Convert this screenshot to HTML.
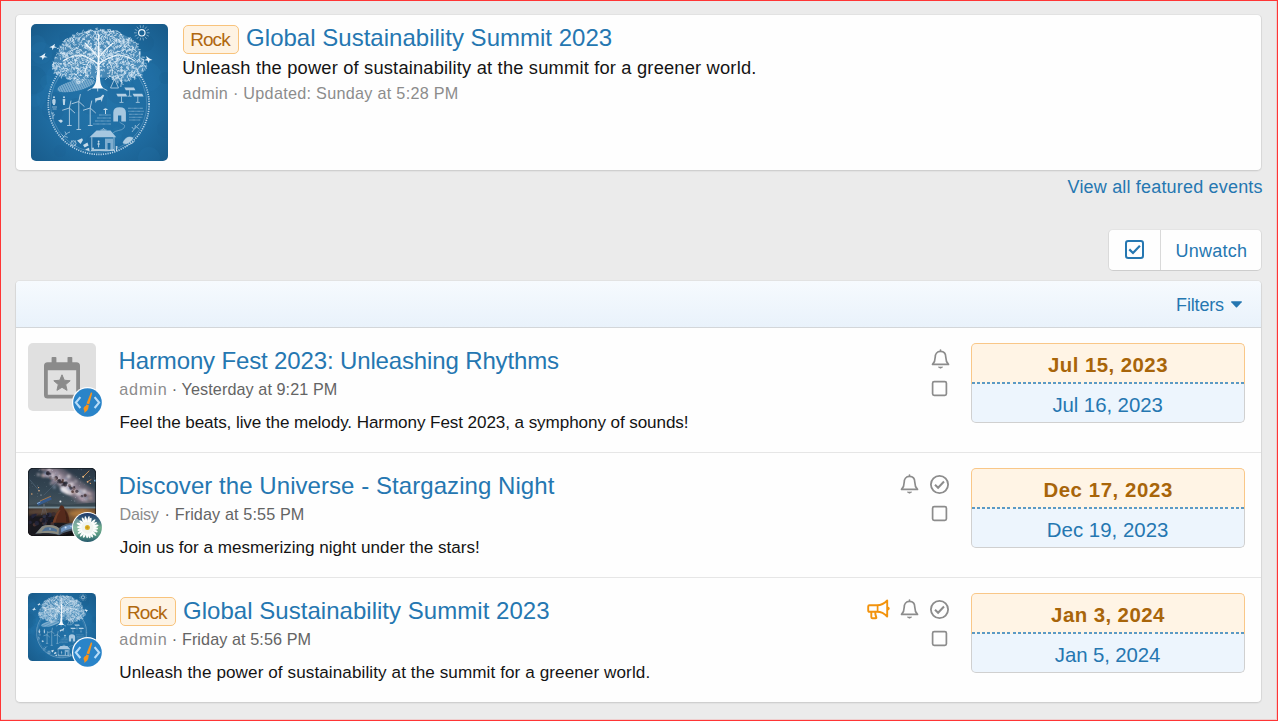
<!DOCTYPE html>
<html><head><meta charset="utf-8"><title>Events</title>
<style>
html,body{margin:0;padding:0}
body{width:1278px;height:721px;position:relative;overflow:hidden;background:#ebebeb;font-family:"Liberation Sans",sans-serif;}
.frame{position:absolute;left:0;top:0;width:1276px;height:719px;border:1px solid #ff3535;pointer-events:none;z-index:50;box-shadow:inset -1px -1px 0 rgba(255,53,53,.16)}
.t{position:absolute;white-space:nowrap;}
.card{position:absolute;box-sizing:border-box;background:#fefefe;border:1px solid #d8d8d8;border-top-color:#e2e2e2;border-bottom-color:#cfcfcf;border-radius:5px;box-shadow:0 1px 1px rgba(0,0,0,.04)}
.btn{position:absolute;box-sizing:border-box;background:#fefefe;border:1px solid #dadada;border-top-color:#e4e4e4;border-bottom-color:#cdcdcd;border-radius:5px}
.label{position:absolute;box-sizing:border-box;background:#fef3e3;border:1.3px solid #f8c37c;border-radius:5px}
.dbox{position:absolute;width:274px;height:80px;box-sizing:border-box}
.dtop{position:absolute;left:0;top:0;right:0;height:41px;box-sizing:border-box;background:#fff4e5;border:1px solid #f9c788;border-bottom:none;border-radius:5px 5px 0 0}
.ddash{position:absolute;left:1px;right:1px;top:39px;height:2px;background:repeating-linear-gradient(90deg,#5a9ac6 0,#5a9ac6 3px,rgba(255,244,229,0) 3px,rgba(255,244,229,0) 5.07px)}
.dbot{position:absolute;left:0;top:41px;right:0;height:39px;box-sizing:border-box;background:#edf5fd;border:1px solid #d0d0d0;border-top:none;border-radius:0 0 5px 5px}
</style></head><body>
<svg width="0" height="0" style="position:absolute"><defs>
<radialGradient id="tbg" cx="50%" cy="52%" r="75%"><stop offset="0" stop-color="#2374aa"/><stop offset="0.55" stop-color="#1f6ca1"/><stop offset="1" stop-color="#175886"/></radialGradient>
<pattern id="tpd" width="2.2" height="1.6" patternUnits="userSpaceOnUse" patternTransform="rotate(-14)"><path d="M0 0.8 H1.5" stroke="#dbe9f4" stroke-width="0.7"/></pattern>
<symbol id="treeart" viewBox="0 0 137 137">
<rect width="137" height="137" fill="url(#tbg)"/>
<circle cx="62" cy="77" r="14" fill="#195d8e" opacity=".14"/>
<circle cx="62" cy="117" r="7" fill="#195d8e" opacity=".14"/>
<circle cx="86" cy="109" r="6" fill="#2a7db4" opacity=".14"/>
<circle cx="19" cy="74" r="14" fill="#2b80b8" opacity=".14"/>
<circle cx="82" cy="54" r="10" fill="#155581" opacity=".14"/>
<circle cx="85" cy="114" r="6" fill="#2b80b8" opacity=".14"/>
<circle cx="26" cy="33" r="5" fill="#195d8e" opacity=".14"/>
<circle cx="45" cy="81" r="7" fill="#155581" opacity=".14"/>
<circle cx="88" cy="68" r="12" fill="#195d8e" opacity=".14"/>
<circle cx="90" cy="56" r="11" fill="#2b80b8" opacity=".14"/>
<circle cx="97" cy="43" r="7" fill="#2a7db4" opacity=".14"/>
<circle cx="4" cy="77" r="6" fill="#2b80b8" opacity=".14"/>
<circle cx="116" cy="53" r="15" fill="#2b80b8" opacity=".14"/>
<circle cx="29" cy="127" r="6" fill="#195d8e" opacity=".14"/>
<circle cx="134" cy="54" r="6" fill="#155581" opacity=".14"/>
<circle cx="107" cy="37" r="6" fill="#2a7db4" opacity=".14"/>
<circle cx="2" cy="56" r="14" fill="#155581" opacity=".14"/>
<circle cx="34" cy="14" r="6" fill="#195d8e" opacity=".14"/>
<circle cx="24" cy="77" r="9" fill="#155581" opacity=".14"/>
<circle cx="135" cy="105" r="9" fill="#195d8e" opacity=".14"/>
<circle cx="16" cy="58" r="7" fill="#2a7db4" opacity=".14"/>
<circle cx="118" cy="134" r="11" fill="#2b80b8" opacity=".14"/>
<circle cx="29" cy="54" r="14" fill="#2b80b8" opacity=".14"/>
<circle cx="6" cy="20" r="9" fill="#2b80b8" opacity=".14"/>
<circle cx="106" cy="45" r="8" fill="#2b80b8" opacity=".14"/>
<circle cx="10" cy="29" r="11" fill="#2b80b8" opacity=".14"/>
<circle cx="82" cy="51" r="10" fill="#195d8e" opacity=".14"/>
<circle cx="114" cy="19" r="9" fill="#155581" opacity=".14"/>
<circle cx="43" cy="31" r="11" fill="#155581" opacity=".14"/>
<circle cx="22" cy="86" r="11" fill="#195d8e" opacity=".14"/>
<circle cx="67.7" cy="80" r="50.4" fill="none" stroke="#c4dcee" stroke-width="1.7" stroke-dasharray="1.2 1.1" opacity=".9"/>
<circle cx="67.7" cy="80" r="48.2" fill="none" stroke="#c4dcee" stroke-width=".5" opacity=".5"/>
<g transform="rotate(-13 45 61.5)"><ellipse cx="45" cy="61.5" rx="19" ry="5.4" fill="#7fb0d3" opacity=".4"/><ellipse cx="45" cy="61.5" rx="19" ry="5.4" fill="url(#tpd)" opacity=".75"/></g>
<g opacity=".33" fill="#9cc4e2"><ellipse cx="68" cy="30" rx="41" ry="24"/><ellipse cx="34" cy="41" rx="12" ry="12"/><ellipse cx="102" cy="41" rx="12" ry="12"/><ellipse cx="46" cy="52" rx="12" ry="5.5"/><ellipse cx="91" cy="52" rx="11" ry="5.5"/></g>
<path d="M106.2 37.4l0.3 1.3M41.8 43.2l1.5 1.6M77.6 19.7l1.8 1.1M46.0 55.3l1.0 0.7M44.9 28.4l1.4 0.3M54.9 35.6l1.5 0.7M83.7 42.4l-0.4 1.3M109.0 43.0l-1.2 0.1M81.6 30.5l-1.0 1.2M72.6 45.0l-1.4 1.5M97.3 55.2l0.9 1.8M59.7 48.1l-0.4 1.9M56.2 36.2l-0.4 1.2M106.0 44.5l0.7 2.0M76.1 28.1l-1.1 0.6M78.1 30.4l1.5 1.3M67.7 38.0l-1.5 0.4M85.8 14.5l2.0 1.2M84.0 28.2l-1.5 0.5M84.6 14.3l0.5 2.1M56.4 36.2l0.7 1.1M67.6 50.7l-1.8 0.9M34.9 28.7l0.9 1.1M59.4 38.7l0.0 1.6M63.2 7.3l2.2 0.2M22.1 43.4l-0.3 1.5M31.6 28.9l2.2 0.2M41.7 11.0l1.9 0.3M62.6 38.9l-1.0 1.9M113.8 42.0l1.4 1.0M65.2 43.7l1.3 0.8M52.6 42.7l-0.1 1.9M93.6 25.4l-1.8 1.4M90.2 10.4l0.3 1.9M83.1 14.7l-1.4 1.7M82.2 43.9l1.8 1.4M109.0 51.8l0.6 1.2M62.1 34.4l-1.3 1.2M24.4 48.6l1.4 0.8M32.9 32.4l-1.4 1.7M86.9 56.9l0.1 2.3M70.7 19.5l-1.3 1.5M70.3 51.1l-0.3 1.5M56.1 51.2l-1.4 0.4M70.4 35.7l1.5 1.1M68.3 37.5l2.4 0.2M69.6 25.8l-1.5 1.1M67.1 42.4l1.8 0.4M65.3 10.2l0.5 2.1M108.1 30.2l0.8 1.2M30.9 47.4l1.4 0.1M40.7 42.2l0.9 1.4M80.0 9.0l-0.9 1.0M69.0 17.3l1.5 1.1M61.7 24.4l0.5 1.8M81.1 39.4l-0.2 2.2M79.2 51.8l1.6 1.4M99.1 54.5l0.9 1.3M90.7 17.8l2.1 0.7M58.3 42.1l1.4 0.1M86.2 54.9l-1.3 0.1M68.6 46.2l-0.0 2.0M73.2 32.3l-0.3 1.3M36.5 14.6l-2.1 1.1M64.7 32.4l0.4 1.9M107.3 48.7l-1.3 1.8M80.9 26.1l-0.6 1.7M43.8 54.9l-1.5 1.5M99.5 26.1l-2.1 0.7M87.5 46.7l-1.2 1.1M52.2 29.7l1.6 0.1M81.9 38.6l1.7 1.6M84.6 22.3l-0.9 1.7M71.3 25.2l-2.0 0.0M88.1 46.4l-1.2 0.1M79.5 45.1l1.2 1.2M55.6 8.6l1.6 1.6M73.0 31.9l-1.9 0.2M65.2 12.6l0.0 1.9M60.1 33.0l-0.5 1.6M46.6 40.3l-0.3 1.5M89.7 19.9l1.5 0.1M93.5 25.2l-2.0 0.7M108.6 27.5l0.2 2.4M42.4 32.8l-2.0 0.4M99.7 37.4l1.8 0.7M63.6 14.6l1.8 0.3M30.4 28.2l-0.9 1.5M44.2 36.2l0.5 2.1M113.3 44.9l1.0 0.9M107.3 47.7l-0.6 1.5M45.2 42.0l-0.4 1.9M81.3 45.9l1.2 0.8M60.5 38.5l1.8 0.6M85.6 34.4l-0.7 1.5M65.9 15.0l1.0 1.8M30.0 49.1l-0.8 2.0M39.3 27.2l1.5 1.6M54.9 40.3l-1.6 0.1M72.9 45.5l0.4 1.6M74.4 30.6l-0.9 1.3M39.3 40.7l1.5 0.4M90.5 42.6l0.9 1.1M53.8 44.4l0.5 1.2M88.9 35.4l-2.3 0.6M109.3 28.0l-1.3 0.9M49.8 25.8l-2.2 0.5M42.8 23.6l0.7 1.5M57.6 25.1l1.5 1.1M97.7 33.8l-1.6 0.9M35.7 46.3l-1.4 0.6M72.4 35.3l-2.0 0.2M26.2 45.0l-1.2 0.4M81.4 11.2l-1.4 1.4M42.5 15.6l-1.4 1.2M94.5 25.5l1.2 2.1M85.2 31.1l-0.2 2.1M88.8 55.2l0.6 2.1M84.7 51.6l-1.8 1.3M82.0 32.9l-1.3 1.7M60.2 27.0l1.9 0.9M60.5 19.6l-1.3 0.1M48.8 9.5l-1.0 1.9M63.9 36.3l-1.2 0.3M39.7 16.4l-1.2 1.5M40.4 13.5l0.9 1.1M93.8 20.8l-0.3 2.2M65.9 17.8l-2.2 0.8M52.2 34.2l-1.8 0.2M56.5 33.1l-0.1 1.5M65.3 24.2l-1.7 1.2M78.6 12.0l1.4 0.8M43.9 52.5l-0.1 2.0M71.5 11.6l-0.9 0.8M100.1 51.2l-1.1 0.7M45.0 43.8l1.7 0.5M96.9 26.8l-1.3 0.3M100.6 14.9l-0.2 1.8M33.8 50.4l0.9 1.3M64.7 43.8l0.9 1.8M28.6 25.5l0.3 2.3M101.0 40.3l1.7 0.1M89.0 16.5l-0.4 1.7M97.9 14.8l-0.6 1.4M55.6 33.8l1.0 1.3M57.2 41.0l1.0 1.0M91.1 21.8l-1.8 0.3M90.4 21.9l-1.1 0.7M85.8 43.4l1.4 0.9M101.7 36.8l1.4 0.4M58.7 7.1l-1.7 0.4M69.2 39.9l-1.6 1.5M56.6 21.9l0.3 1.2M58.1 42.9l-2.1 0.1M84.0 37.7l1.6 0.1M52.2 40.1l1.6 0.5M68.9 47.9l-1.6 1.0M33.8 46.7l-1.8 0.6M53.3 31.5l1.9 0.9M89.5 50.6l1.9 1.4M80.7 14.3l1.4 0.4M64.3 10.1l-1.4 0.1M108.4 34.0l-0.4 1.8M44.4 54.8l-2.2 0.1M78.2 10.0l-1.3 0.8M72.8 7.3l1.4 0.1M83.8 20.5l-1.1 1.8M56.2 36.7l-1.0 0.7M38.0 29.7l1.5 0.7M75.0 12.9l-0.1 1.5M74.8 21.9l-0.5 1.1M85.1 11.3l-1.9 0.2M65.0 26.5l-0.8 1.9M93.8 45.8l0.1 2.4M101.8 51.7l0.5 1.7M70.5 27.6l-1.5 0.5M23.5 44.4l-2.0 0.6M77.3 7.0l1.6 0.7M68.3 25.6l2.0 0.3M70.6 16.6l1.0 1.4M84.6 52.4l0.5 2.1M40.2 45.6l-0.5 2.2M27.9 48.2l1.7 0.7M42.4 20.1l0.7 1.1M107.5 49.5l0.5 1.5M76.6 5.6l2.3 0.2M48.8 31.4l-2.3 0.5M65.3 14.8l1.4 1.8M101.8 23.2l0.1 1.4M38.2 39.0l1.9 1.3M90.6 20.8l-2.1 0.7M89.3 10.7l-1.3 1.9M62.5 7.5l1.2 1.0M89.1 14.2l1.2 0.8M84.5 48.1l0.8 1.8M106.4 36.6l1.2 1.0M110.7 41.0l1.3 1.5M62.0 33.1l-0.1 1.2M78.0 19.2l1.5 1.5M93.6 17.0l1.2 1.4M36.6 54.1l-1.2 0.0M36.0 34.7l-0.7 1.5M83.8 47.6l-0.1 1.8M102.5 42.0l-0.2 2.3M35.4 47.4l1.7 1.0M41.5 28.1l-1.6 1.4M97.1 16.4l0.1 1.5M76.0 31.4l1.9 0.2M89.5 35.6l-1.3 0.6M67.6 27.8l0.3 1.5M108.7 35.4l-0.3 2.1M41.8 11.3l0.7 1.0M49.4 38.4l-0.1 1.5M76.9 8.0l-1.2 0.8M43.5 12.1l-1.2 1.8M59.1 23.8l1.8 1.5M32.5 29.0l-0.9 0.9M42.1 53.7l1.5 0.7M47.8 27.2l1.2 0.3M91.4 16.1l1.3 1.3M42.2 29.3l-1.6 0.3M79.1 5.3l0.6 1.9M87.5 52.3l-0.6 2.2M64.3 25.4l-1.5 0.8M96.1 15.3l0.7 1.3M73.0 12.3l1.2 0.9M64.8 20.6l0.4 2.4M85.9 52.2l1.3 1.0M25.3 42.4l0.6 1.4M44.2 25.4l-2.0 0.5M44.9 23.6l2.1 1.1M54.0 46.6l-1.5 1.7M56.4 7.7l-1.5 0.6M95.1 32.6l1.6 0.3M33.1 36.9l1.6 0.2M60.4 34.0l1.9 0.8M44.0 44.4l-0.7 1.2M38.5 19.0l-1.0 1.3M56.7 52.4l1.2 1.0M52.5 15.3l1.2 0.2M81.0 35.3l-2.0 1.3M47.8 41.2l-1.4 0.4M86.9 41.0l-2.2 0.3M41.5 39.1l1.6 0.5M57.2 6.4l0.6 1.5M67.7 18.9l1.5 0.8M65.5 12.5l-0.7 1.3M60.2 11.6l-0.5 2.0M57.1 23.8l1.7 0.3M76.6 29.7l0.8 1.3M107.2 35.2l1.4 1.5M36.6 29.7l-0.8 2.2M54.3 35.8l-2.1 0.4M80.7 38.4l0.5 1.6M45.6 50.3l-1.5 0.6M31.6 31.9l0.9 1.3M37.2 16.0l-0.8 1.3M57.4 16.6l0.0 2.0M72.8 38.6l-0.4 2.2M52.7 53.5l1.1 1.7M87.5 42.1l-2.2 0.2M33.9 38.4l0.1 1.9M55.0 19.3l-1.3 1.3M41.7 17.2l0.7 1.2M69.4 10.2l1.3 0.3M28.2 43.2l1.6 0.6M95.2 30.4l2.0 1.1M43.4 31.9l-1.3 1.0M89.6 17.4l-1.0 1.2M51.4 46.3l-1.9 1.0M74.7 27.0l-1.2 1.6M101.1 48.7l1.5 0.6M84.9 16.2l1.0 0.7M86.8 26.9l-0.7 1.5M22.9 43.7l1.2 0.5M46.6 44.7l-1.3 0.0M72.3 30.5l0.6 1.4M98.0 50.8l1.0 1.3M79.8 46.6l-1.7 0.1M87.4 34.1l-1.1 0.8M66.8 9.9l0.6 1.0M74.6 11.2l-0.6 1.4M40.8 30.5l0.6 1.4M38.2 52.4l0.1 1.7M98.7 25.6l1.8 0.3M83.7 38.5l1.5 1.8M93.4 20.7l-0.1 1.2M99.0 48.2l-1.1 1.2M98.3 50.2l-1.8 1.6M58.2 43.2l1.6 1.6M40.7 25.1l0.8 1.8M99.1 23.8l-0.7 1.5M45.9 54.6l0.7 1.1M51.5 45.3l1.6 1.3M72.6 41.8l1.1 0.7M32.3 23.0l0.3 1.2M68.3 26.0l1.0 1.6M106.0 21.3l-1.0 0.9M58.8 43.2l1.3 0.8M85.7 57.0l0.8 1.2M32.8 39.2l0.7 1.8M39.2 38.1l-2.1 0.8M80.9 31.8l-0.3 1.3M101.7 42.3l0.3 2.0M59.9 24.9l1.4 1.3M75.3 32.4l1.9 0.2M62.7 36.8l-0.7 2.2M33.2 29.7l-2.1 0.0M49.3 45.0l-1.7 0.1M41.4 50.9l-1.1 2.1M100.9 48.5l-0.1 2.4M89.2 17.3l-1.4 1.0M46.0 39.7l1.8 0.4M96.7 31.0l1.6 1.5M103.5 46.9l-0.4 2.3M54.6 8.7l1.6 0.2M104.5 50.5l1.3 0.5M56.9 51.4l-0.8 2.1M38.7 38.9l-1.9 0.8M37.7 41.1l0.3 1.2M52.0 21.0l-0.6 1.4M78.3 42.6l1.1 0.7M87.4 29.6l1.2 0.5M112.1 37.8l0.6 1.3M91.6 23.5l0.9 1.4M32.6 39.0l0.5 2.1M58.9 29.0l-0.0 2.3M52.6 43.1l1.4 1.3M46.5 52.7l1.4 1.7M85.7 28.9l-1.6 0.3M92.3 37.3l0.2 1.3M59.9 19.0l0.4 2.3M47.3 42.6l-0.8 1.3M59.2 10.5l-1.4 0.5M60.1 22.5l-1.9 1.2M77.1 34.1l2.2 0.7M55.4 44.2l-0.8 1.4M64.9 23.6l0.2 1.6M85.1 37.5l-2.4 0.2M100.9 40.0l-1.4 1.9M58.1 40.4l1.8 1.5M38.9 24.1l1.5 0.7M34.7 40.0l-0.8 1.9M43.3 49.2l-1.4 1.6M30.0 29.7l2.2 0.1M71.6 33.4l2.0 0.7M48.2 31.9l1.7 0.7M69.2 19.8l-1.1 1.0M59.4 6.1l1.4 1.1M73.8 29.2l-1.2 0.6M58.6 37.9l-2.1 1.0M33.4 49.7l-1.4 1.5M33.7 33.3l1.3 0.1M48.1 58.1l-1.0 2.0M50.9 30.9l-1.1 2.0M112.6 35.4l-0.0 2.3M57.4 20.1l-1.0 1.1M54.8 27.5l0.1 1.6M61.0 28.7l2.2 0.3M24.2 33.1l-0.2 1.7M55.2 20.9l0.1 1.5M92.9 30.8l1.7 0.0M54.6 37.1l0.6 1.4M78.9 36.6l1.0 1.5M69.6 46.0l1.3 0.2M43.2 18.4l-1.4 1.0M104.0 25.9l1.3 1.6M101.2 21.7l1.2 1.8M96.8 39.6l2.1 0.4M22.8 38.6l-0.4 2.3M111.4 45.9l-0.3 1.2M91.7 26.8l-1.3 2.0M96.1 28.1l-1.2 1.2M62.8 27.9l1.5 0.6M29.6 50.5l-0.9 1.6M49.0 57.4l-0.4 2.3M39.1 26.6l-0.3 2.2M30.3 52.8l0.1 1.2M61.2 24.5l-1.2 2.0M67.4 42.3l0.7 2.0M28.5 45.3l1.6 1.0M38.2 22.7l1.4 0.8M77.1 32.6l0.6 1.8M102.2 23.4l-0.5 1.7M87.7 16.3l1.4 1.5M75.5 17.7l2.1 0.4M55.8 43.8l0.4 1.9M109.0 29.0l0.1 1.5M48.7 51.3l2.0 0.2M74.8 34.4l0.7 1.2M113.1 46.6l-1.1 0.8M96.4 15.5l1.5 1.1M79.0 9.9l-1.4 1.3M86.9 23.7l-2.0 0.3M47.1 51.9l-1.0 1.1M71.7 17.5l0.9 1.2M31.2 30.6l1.0 1.2M45.8 32.0l-1.3 0.5M104.0 51.7l-0.6 1.7M91.4 33.5l-1.1 2.0M95.5 17.8l2.3 0.4M54.3 47.9l1.3 1.2M55.0 44.6l-1.8 0.3M74.6 22.9l1.7 1.6M83.7 7.1l-1.3 0.4M74.5 9.8l-1.6 0.1M84.6 6.9l1.9 0.2M103.5 47.7l-0.1 1.3M70.7 13.5l-0.1 1.6M67.9 14.3l-1.0 1.4M66.6 7.5l0.1 1.9M31.5 20.1l1.0 1.8M77.1 42.1l-0.7 1.8M101.0 42.2l-0.1 1.9M93.7 49.0l1.3 0.0M101.3 26.2l0.8 1.4M44.2 36.4l-0.1 1.6M85.5 28.9l1.7 1.5M43.3 30.3l-1.2 1.0M41.8 40.3l1.2 1.3M43.5 53.0l1.2 0.8M48.1 21.8l-1.3 1.5M97.0 33.8l2.1 0.5M42.4 15.4l0.6 2.3M55.1 23.3l-2.3 0.7M56.7 10.7l-1.7 1.3M51.8 48.1l0.6 1.4M67.9 24.7l2.2 0.5M89.5 56.9l1.1 0.8M85.8 53.3l-1.5 1.8M63.4 24.2l1.4 0.6M36.5 22.8l1.5 0.2M70.7 33.8l-0.4 2.1M94.1 55.7l-0.0 1.4M51.0 35.4l1.3 1.7M78.3 51.2l0.2 1.4M58.1 6.0l1.2 0.7M91.6 15.1l1.5 0.1M97.9 31.5l-0.8 1.6M44.1 38.3l0.7 1.6M80.4 21.1l1.0 2.0M76.1 26.8l-0.2 1.7M51.2 55.1l1.7 1.6M103.3 53.3l1.6 0.9M35.1 44.2l1.4 1.3M46.4 8.5l-0.9 1.3M73.9 31.3l-1.8 0.4M67.6 18.3l-0.5 1.9M64.2 8.1l0.0 1.8M46.0 28.2l2.1 0.6M41.4 50.3l-1.2 0.9M108.3 31.7l0.4 1.8M66.2 19.6l-1.6 0.9M52.2 14.2l1.7 1.4M109.7 42.1l-1.7 1.2M99.0 48.7l1.9 1.1M48.3 16.9l-1.2 0.3M69.2 22.6l-1.5 1.2M82.4 6.7l-0.7 1.2M49.1 13.6l-1.2 1.7M30.5 44.4l2.2 0.4M94.9 47.8l-1.7 0.7M112.3 39.4l0.0 1.7M34.1 48.4l1.5 1.3M95.5 42.6l-0.1 1.6M45.3 13.7l-0.9 1.8M47.1 57.3l-0.9 2.2M95.4 22.0l1.2 1.4M66.8 5.0l-1.7 0.8M65.3 45.4l1.0 1.0M76.1 16.8l0.7 1.1M82.0 26.6l0.4 1.4M30.2 27.7l-1.2 1.8M73.5 39.5l-2.2 0.4M43.1 33.8l-1.8 0.0M36.9 46.7l1.4 0.2M73.1 18.5l-1.3 1.6M49.9 46.7l-0.9 1.8M63.7 27.7l1.7 0.6M44.9 42.6l0.3 1.3M60.6 35.7l-1.2 1.2M83.0 41.8l-0.4 1.2M89.1 10.3l1.7 0.3M57.1 29.7l2.2 0.8M103.2 30.7l-0.4 1.5M48.4 15.6l-1.7 0.7M59.0 25.7l-1.4 0.5M97.1 43.4l0.3 1.6M61.7 28.8l1.1 1.6M59.1 20.3l-1.3 1.1M65.4 53.1l0.2 1.6M96.6 25.9l-1.1 1.8M47.6 44.3l-2.0 0.3M84.9 27.8l-0.7 1.3M95.0 33.7l-1.6 0.1M79.4 15.6l0.8 2.3M37.7 55.0l1.9 0.4M100.1 50.7l0.6 1.8M89.2 46.4l-1.3 1.4M43.2 43.2l-0.4 1.8M96.1 21.5l-1.5 1.8M45.4 35.3l-0.2 1.8M34.7 38.7l-1.9 0.7M46.9 48.9l0.3 1.3M78.6 29.2l-0.2 2.4M53.3 46.3l1.5 0.4M87.2 42.3l-1.4 0.9M45.4 23.4l-0.1 1.2M55.5 40.5l1.4 0.7M43.0 13.1l1.2 0.5M97.4 45.1l1.2 1.3M99.9 52.0l1.6 1.3M87.9 22.2l-1.4 0.5M65.4 20.9l0.4 2.1M75.0 37.7l-1.5 0.1M40.3 38.3l2.1 1.1M52.1 28.1l0.5 2.1M109.5 41.6l1.4 0.8M88.6 15.3l-2.1 0.8M40.6 23.8l1.6 1.4M22.7 42.7l2.2 0.4M72.3 36.2l1.2 0.4M78.0 52.2l1.3 0.3M35.6 18.5l-1.0 1.8M50.2 29.6l1.2 1.5M53.6 23.5l1.1 1.1M49.0 36.7l0.9 1.0M102.6 29.7l-0.1 1.6M106.7 46.0l-0.7 1.8M87.2 31.5l0.4 1.6M68.4 29.7l-0.2 1.8M96.9 53.9l0.9 0.8M97.6 38.4l0.9 1.1M104.9 50.7l-1.1 1.7M92.5 28.9l0.6 1.8M109.7 50.6l1.5 0.3M69.5 20.7l-1.7 0.8M32.8 25.2l-0.6 1.2M76.2 12.9l0.3 2.3M85.4 15.4l0.3 1.8M51.7 35.9l-0.5 1.1M40.0 40.4l1.0 0.8M94.2 22.0l-1.9 0.2M28.1 39.3l1.5 1.6M90.4 46.2l1.2 0.2M34.4 30.0l-1.6 0.2M43.9 50.2l1.6 1.1M56.3 49.9l1.4 1.5M36.5 31.2l-1.5 0.1M45.9 55.3l-0.7 1.1M36.6 16.5l1.4 1.7M85.0 38.8l0.7 1.9M67.3 6.4l0.0 1.7M71.1 5.8l2.4 0.2M55.1 21.8l1.7 0.9M68.0 31.5l-1.4 1.3M41.9 13.8l-0.8 1.0M36.9 29.7l-1.7 0.9M92.6 46.4l-0.8 1.0M56.1 7.9l2.2 0.3M46.7 13.9l1.4 0.5M82.0 12.6l1.6 0.9M55.6 11.5l-0.4 1.8M56.8 30.0l1.9 0.2M37.3 22.1l2.3 0.1M76.8 25.4l-0.3 2.3M31.2 24.9l-1.0 1.3M88.7 54.8l1.5 0.2M47.3 45.8l-1.6 1.3M57.3 51.6l-1.0 0.9M104.6 23.6l-0.8 2.2M107.8 35.9l-2.3 0.8M101.9 40.4l-1.4 0.2M58.4 35.2l2.0 0.9M24.2 38.8l1.0 1.2M78.7 13.9l0.4 2.2M54.6 42.5l1.8 1.2M37.9 34.7l0.6 1.1M50.8 18.7l-2.0 0.1M24.5 43.8l1.3 1.2M90.3 51.8l-1.7 0.3M49.8 25.7l1.2 1.7M64.3 42.1l1.9 1.0M79.7 12.2l1.7 0.2M36.3 44.7l-0.5 2.0M29.3 39.6l1.5 0.1M24.4 33.3l1.8 0.8M100.4 22.6l1.9 0.7M90.9 53.4l-0.3 1.9M104.3 41.6l-1.5 0.1M95.4 39.1l0.1 1.2M65.6 18.0l-0.6 1.7M69.0 6.3l1.8 0.8M97.3 19.5l0.3 1.8M98.4 25.5l-1.7 0.4M57.8 30.3l1.0 2.2M25.9 41.6l1.2 0.6M60.3 37.3l-1.3 1.2M47.5 24.0l-1.4 0.5M66.3 10.5l2.1 0.9M85.5 15.2l0.3 1.9M51.5 11.2l-1.0 0.8M21.7 40.2l0.2 2.3M97.1 14.8l1.9 0.3M65.0 20.2l-1.4 0.4M82.3 7.2l-2.3 0.6M79.8 21.3l-1.5 1.7M68.4 11.0l-0.3 2.3M73.2 21.1l1.8 1.1M93.9 22.2l0.5 2.0M90.8 29.4l1.2 0.5M35.0 50.1l0.0 2.0M54.5 24.0l2.0 1.2M78.6 10.3l-1.1 1.5M79.3 46.9l-0.8 2.1M82.8 24.3l0.5 1.6M82.7 23.1l1.0 2.0M98.0 41.5l-1.5 0.8M82.3 17.3l0.7 1.1M97.8 55.5l1.0 1.3M81.8 53.8l1.5 0.4M93.9 15.9l-1.5 0.6M65.3 14.5l1.0 1.4M45.8 44.6l2.0 0.2M98.3 21.6l1.1 0.8M25.7 48.2l-0.4 1.2M63.3 37.1l0.7 1.0M60.1 23.2l-1.6 0.1M75.4 10.2l-1.1 0.7M73.7 8.5l1.6 0.5M75.8 54.1l-1.4 1.4M65.3 47.3l-0.7 1.2M71.0 26.6l-0.1 2.1M86.9 35.5l-1.7 1.3M61.9 29.5l-0.3 1.5M95.9 21.9l-1.9 1.0M94.9 36.7l-0.8 1.5M70.1 14.6l0.2 1.5M85.6 9.1l1.3 0.6M71.3 36.2l2.4 0.0M101.5 24.7l1.9 1.0M93.6 49.6l-1.4 0.3M41.1 54.3l-1.7 0.5M30.7 23.1l1.4 1.4M90.0 47.2l0.3 1.7M64.8 24.1l0.3 2.0M89.1 21.6l-0.3 1.3M54.9 20.7l1.7 0.8M101.9 24.8l1.1 0.7M41.1 44.3l-1.0 0.8M36.9 21.0l-1.6 1.4M48.3 28.8l0.8 1.6M97.4 17.9l-1.9 1.3M48.3 28.2l-1.8 1.0M38.4 54.2l-1.7 0.7M47.2 26.9l-1.9 0.3M42.5 44.7l0.7 1.3M59.2 34.1l0.6 1.8M85.4 22.1l0.0 1.7M47.7 20.0l1.2 0.4M66.1 4.1l-1.5 0.6M62.4 33.0l1.3 0.1M96.5 34.7l0.0 1.6M93.1 31.7l-1.8 1.3M107.4 44.4l-0.9 1.5M71.3 36.0l-0.2 2.2M93.2 38.1l-0.7 2.2M34.5 35.1l1.9 0.9M66.9 44.9l1.3 1.9M91.3 53.1l-1.2 1.0M26.1 43.4l-0.8 1.0M111.5 33.1l1.8 0.2M51.8 8.9l-2.2 0.8M30.4 28.4l1.3 1.5M29.0 22.0l0.5 1.7M61.5 37.0l-2.3 0.4M108.7 50.2l1.1 1.0M64.0 39.7l-0.5 1.5M38.9 44.7l-1.1 0.6M41.7 16.8l-1.8 1.4M89.7 29.9l-1.5 1.5M68.9 18.5l-0.2 2.0M50.4 39.4l2.1 1.1M39.1 15.9l-2.3 0.3M102.9 49.8l-0.3 1.3M91.2 50.6l-1.1 0.6M24.1 44.6l0.1 2.3M85.6 40.9l-0.9 1.3M82.0 6.9l-2.0 0.6M98.3 29.3l1.4 1.0M86.1 34.2l1.1 0.4M57.8 17.0l1.1 1.0M59.6 42.6l-0.6 1.0M104.8 37.7l-1.3 1.4M53.4 22.3l1.9 0.4M23.4 41.8l-1.9 0.6M78.6 49.1l-2.2 0.3M81.8 52.2l-0.6 1.5M107.7 25.6l1.6 0.1M57.5 18.7l-0.7 1.1M48.6 25.5l1.8 0.7M71.1 15.9l1.6 0.1M66.8 32.9l1.2 1.4M46.5 49.5l-1.5 1.3M92.8 50.9l-2.1 0.1M33.8 35.3l-0.7 1.8M69.0 18.3l-1.7 0.1M25.0 41.1l1.0 1.1M48.3 37.6l1.1 1.7M43.3 50.0l1.8 0.5M89.7 33.0l2.2 0.0M99.9 31.3l0.2 1.2M85.8 9.6l-1.3 1.6M50.9 47.0l-0.4 1.6M70.6 18.7l1.4 1.8M53.0 47.0l0.6 1.3M76.9 6.6l1.1 0.6M79.2 38.5l-1.5 0.2M41.3 15.6l1.1 0.6M67.4 26.9l0.9 2.1M49.4 50.1l-0.1 1.3M88.2 16.3l-1.2 1.8M90.7 16.9l2.1 1.1M72.1 5.9l0.9 2.1M53.4 7.7l0.6 1.3M61.3 38.1l-0.6 1.2M71.4 6.2l0.4 2.1M44.2 49.9l1.2 1.2M73.4 33.6l-1.5 1.8M87.4 15.7l1.4 1.0M46.1 34.5l2.0 0.6M59.7 5.8l2.2 0.9M102.9 53.2l0.8 2.2M35.0 44.4l-1.4 0.3M26.4 48.8l-0.6 1.7M29.5 39.6l1.2 0.6M77.4 39.7l-1.8 1.3M31.7 20.3l1.6 0.8M86.2 49.1l0.1 2.3M101.5 50.3l-1.2 0.8M52.5 6.2l-1.3 1.2M61.1 52.4l-1.6 1.6M79.7 6.6l-1.2 2.0M68.6 11.3l-0.3 1.2M64.2 7.6l0.6 2.1M91.9 51.6l0.2 1.7M23.5 48.0l-0.4 1.6M32.5 29.1l1.3 0.3M31.7 50.2l-0.8 2.1M73.3 12.1l1.4 1.7M76.5 39.8l-0.5 1.2M38.0 27.6l-2.1 1.1M77.1 17.8l1.9 0.3M38.7 14.7l1.2 0.1M98.7 52.7l1.1 0.6M75.6 17.0l-0.8 2.1M92.7 19.0l-0.5 1.5M94.0 17.7l-1.8 0.8M107.2 22.7l-1.9 0.3M43.7 39.9l0.7 1.1M22.0 37.8l1.0 0.9M93.5 18.6l1.0 2.1M100.9 50.6l-1.9 0.1M111.5 38.5l-0.4 1.5M55.9 35.5l1.4 1.4M104.4 44.1l0.9 0.8M54.7 27.7l-1.6 0.9M69.8 37.5l-0.3 2.0M73.8 34.5l1.0 0.9M62.0 53.5l1.1 1.5M69.8 28.9l1.8 1.1M45.9 14.6l1.1 0.7M70.4 12.8l-0.8 1.7M80.5 30.4l-0.5 1.5M64.4 42.2l1.6 1.3M79.6 34.3l-1.2 1.0M55.3 27.6l-1.4 1.5M56.5 8.0l1.9 0.1M89.9 38.1l-1.3 1.1M92.2 37.4l-0.8 1.7M84.7 34.9l1.9 0.6M88.4 27.4l-1.8 0.2M34.6 32.1l0.6 1.3M89.2 12.7l-0.1 2.4M108.8 28.6l-0.7 1.6M34.4 23.3l0.4 2.2M29.4 33.7l0.2 1.9M97.2 37.2l1.2 2.0M77.9 18.5l-0.3 2.2M22.6 39.9l0.1 1.5M33.9 16.2l0.3 1.7M78.1 18.4l-0.7 1.6M97.6 48.9l1.7 1.6M72.6 22.1l1.4 1.5M104.0 18.1l-1.6 0.7M58.1 35.9l-0.1 1.9M35.6 31.2l-1.1 0.6M82.8 51.7l-0.6 2.2M85.3 16.7l0.7 1.6M66.3 14.4l0.1 2.2M45.3 36.5l1.4 0.4M36.7 31.8l-0.8 1.2M86.9 36.4l-1.7 1.7M63.5 32.1l1.1 0.7M82.5 8.9l1.3 0.1M72.3 14.2l1.4 1.6M62.6 11.4l-1.3 2.0M80.2 28.4l-0.2 2.0M101.8 47.8l1.5 1.5M68.7 13.5l-0.3 1.5M57.9 10.1l-1.1 2.0M86.8 21.1l-0.1 1.6M57.1 47.0l1.8 0.0M69.2 11.4l-1.0 1.1M58.3 17.1l-0.5 1.6M86.4 27.2l-1.4 1.2M28.5 31.0l1.1 1.1M91.9 11.9l-0.5 1.2M41.3 47.4l-1.1 1.0M68.8 48.6l-0.6 1.7M36.8 32.9l-0.5 1.7M81.6 35.1l-0.7 1.5M102.2 33.3l-2.2 0.9M100.8 47.0l-1.0 1.5M84.1 17.1l-0.6 1.7M78.7 27.5l1.1 1.1M87.7 53.5l0.8 1.3M62.8 27.5l-0.9 1.9M94.8 49.1l-1.5 1.8M62.9 28.5l-0.7 1.4M100.9 26.8l-0.3 1.8M45.8 30.1l-1.3 0.2M97.1 18.9l2.3 0.1M111.9 41.4l-1.9 1.2M35.8 31.8l1.6 0.5M67.6 49.6l1.2 1.6M32.1 17.6l1.9 0.3M111.7 44.2l-0.5 2.2M36.0 19.7l-0.3 1.9M113.5 41.7l2.3 0.3M64.7 14.7l-1.4 1.3M103.5 34.4l1.2 1.3M64.6 23.1l-0.3 1.3M91.8 25.9l-1.8 0.6M83.8 19.3l-1.5 0.5M102.5 16.9l-2.0 0.3M35.8 44.7l1.5 0.8M55.9 22.1l0.6 1.3M58.0 8.3l-1.3 1.0M89.2 27.4l-2.2 0.2M88.6 50.9l-2.2 0.6M59.3 36.8l1.6 0.4M50.8 38.5l2.1 0.0M66.5 51.0l-0.6 1.3M84.6 16.4l-0.6 1.6M45.2 20.7l-1.6 0.2M42.3 33.5l-1.2 2.0M90.3 31.2l-1.1 1.7M35.7 20.3l1.3 0.8M70.4 46.2l1.2 0.6M32.0 31.0l1.3 1.7M68.6 32.8l0.5 1.1M100.1 25.2l-1.1 0.7M61.2 33.8l1.1 0.6M91.3 37.3l0.1 1.4M82.2 28.3l-0.7 1.1M47.4 9.4l-1.3 1.2M46.6 47.5l-0.1 1.5M71.9 41.8l1.6 0.6M79.1 26.3l-0.7 1.4M83.5 14.9l0.1 1.7M70.6 6.1l1.5 1.4M34.6 30.2l-1.9 0.0M91.4 46.9l-1.7 0.2M57.6 46.0l1.8 0.1M45.1 34.7l-1.5 1.7M68.7 42.4l1.9 0.5M111.0 38.1l0.1 1.8M59.2 13.2l1.8 1.3M69.6 5.2l-0.8 2.1M83.1 13.3l-1.4 0.2M68.8 29.2l1.3 0.8M22.1 39.8l-0.7 1.3M82.9 29.6l-1.5 1.5M91.2 45.6l-0.4 1.3M92.4 13.0l-1.6 1.2M81.7 7.3l0.9 1.9M101.7 51.0l-0.9 1.2M35.2 21.2l-1.2 0.2M34.1 44.8l-1.1 1.0M74.6 7.8l-1.4 1.4M101.1 46.3l-0.0 2.4M64.2 28.4l-0.9 1.9M45.2 54.1l-1.5 0.6M34.9 41.0l0.3 1.4M45.5 23.7l-1.3 1.4M96.7 46.0l-1.9 1.1M64.3 19.9l-1.2 0.8M78.6 37.5l-0.2 1.3M74.1 32.8l0.8 1.2M33.6 30.5l0.8 1.7M85.4 18.7l-0.5 1.4M92.6 14.6l-0.6 2.0M97.9 33.3l-2.3 0.7M97.2 23.4l1.3 1.4M27.4 40.1l0.8 2.2M98.6 33.3l0.8 1.4M105.2 20.0l2.4 0.1M56.0 47.2l0.3 2.3M26.0 30.0l-0.5 1.1M85.8 7.5l1.3 0.3M96.9 56.7l-1.8 0.5M27.1 47.3l-0.0 2.1M81.4 35.3l1.2 0.7M46.9 57.4l2.1 0.3M77.5 36.3l0.5 1.5M32.0 42.7l0.8 1.8M60.3 23.1l-1.9 0.4M37.7 29.1l1.8 0.1M68.8 33.7l1.5 1.2M49.2 43.1l2.2 0.4M62.9 12.9l1.2 1.5M40.1 26.4l1.7 0.4M35.8 34.2l-0.6 1.2M39.9 37.4l0.9 0.8M87.5 52.5l-1.8 1.3M39.3 20.7l-0.6 1.8M80.6 34.5l1.1 1.0M76.1 7.9l-2.2 0.9M56.3 23.6l0.7 1.1M62.8 30.5l1.7 1.5M106.6 31.5l-1.3 0.9M93.3 47.3l0.9 1.9M53.1 12.9l0.3 1.3M89.8 17.3l0.0 2.2M90.6 42.5l-1.4 1.5M109.9 36.9l-0.9 1.6M48.0 13.8l-0.0 1.6M89.4 39.3l1.5 0.0M79.9 25.6l-0.9 1.5M29.1 42.3l-1.3 0.1M79.6 38.0l-0.6 1.7M105.2 27.8l-1.7 1.1M41.2 49.7l-1.4 0.3M66.5 53.7l-1.2 1.5M47.1 38.0l-1.1 1.1M48.6 54.6l-1.9 1.4M27.4 38.7l-1.6 1.7M90.6 19.0l1.3 0.4M43.9 35.5l0.7 1.2M26.7 42.1l-1.1 0.7M54.1 33.5l-1.0 0.7M105.3 47.1l-1.1 1.2M37.9 36.4l-0.8 1.0M59.5 22.0l1.1 0.7M81.4 55.4l1.8 0.8M54.5 51.3l-0.6 1.8M31.7 27.9l1.8 0.5M40.4 42.8l0.5 1.1M44.9 32.6l2.1 0.4M89.6 9.7l-0.5 1.3M71.0 8.3l1.1 1.3M72.4 40.3l-1.6 0.4M53.0 14.9l-1.1 1.2M39.2 14.0l0.5 2.1M76.2 17.6l0.6 2.0M26.4 28.9l1.1 1.1M51.8 14.3l-0.3 1.2M41.8 18.0l1.9 1.2M86.6 53.6l1.3 0.6M49.3 32.0l-1.9 1.1M53.0 10.3l-1.3 0.6M49.9 13.0l-1.2 0.6M62.0 15.6l1.7 1.7M89.4 45.0l1.0 2.1M114.5 39.2l1.0 0.8M72.5 30.7l-2.2 1.0M99.7 16.8l-1.9 0.1M92.0 40.7l2.3 0.2M47.8 47.0l-0.2 1.8M101.5 25.5l-1.3 0.6M52.9 21.3l1.7 0.2M99.8 30.3l1.5 0.3M95.3 19.7l1.6 0.5M75.8 10.2l0.7 1.7M92.5 26.2l-1.5 0.0M109.5 34.1l1.9 1.1M53.6 48.1l-1.2 1.4M56.7 20.8l-1.8 1.2M96.1 43.6l0.9 1.5M90.3 43.3l0.3 2.3M81.2 53.4l1.4 1.0M47.2 31.4l-1.7 1.7M109.0 51.6l-2.1 0.2M58.8 30.9l2.2 0.7M55.3 16.9l1.8 0.5M51.7 57.0l-0.7 1.6M86.8 37.9l0.0 1.8M97.4 21.0l0.9 1.5M47.6 46.3l1.8 0.6M89.4 22.6l-1.1 1.2M80.3 8.8l1.0 1.6M79.1 29.4l1.8 0.2M104.5 18.5l1.5 1.2M25.4 38.6l-2.0 0.8M77.0 52.9l1.1 1.2M82.1 38.9l0.6 1.2M50.9 16.2l-0.8 1.8M81.0 54.9l1.4 0.0M28.0 24.1l-1.7 0.5M97.9 13.4l1.0 1.9M47.3 44.6l-0.6 1.9M77.0 42.7l0.1 1.9M57.0 18.7l0.9 1.2M87.4 8.0l1.7 0.7M84.9 45.3l1.4 1.1M30.1 22.7l0.1 1.5M38.2 53.1l1.4 0.1M49.8 44.8l-2.2 0.5M96.7 43.0l0.5 1.8M111.0 35.6l1.7 0.1M105.1 43.4l0.1 2.3M93.6 15.8l-1.3 1.8M50.0 20.3l1.5 1.3M97.6 40.0l-1.3 0.4M46.7 25.9l-1.7 1.3M71.0 45.2l-1.5 1.0M85.9 51.6l-1.2 0.7M99.6 13.8l-1.9 1.0M83.8 38.5l2.0 1.1M39.5 50.5l-1.3 0.2M88.1 34.3l-1.7 0.5M59.2 16.3l-1.4 0.7M90.3 57.1l1.0 1.6M59.4 6.7l-1.6 0.9M34.3 16.1l-1.0 0.7M56.7 51.2l-1.3 0.6M92.2 23.4l-1.5 1.3M60.3 29.2l-0.4 2.0M58.2 32.6l-1.7 1.0M45.2 57.2l0.8 2.1M114.5 42.8l0.8 1.9M68.1 39.3l-1.1 1.6M35.8 35.4l0.5 2.0M95.4 14.8l0.6 1.4M96.3 52.0l-0.0 1.4M55.2 7.8l0.5 1.7M71.3 12.5l1.7 1.1M69.6 26.3l0.0 1.7M85.8 36.8l1.8 0.3" stroke="#dcebf6" stroke-width=".85" stroke-linecap="round" fill="none" opacity=".82"/>
<path d="M66.4 22C67 34 66.6 50 64.8 58 64 61 62.5 63 60.5 64.5L73 64.5C71 63 69.8 61 69.4 58 68.4 50 68.6 34 68.4 22Z" fill="#f6fafd"/>
<g stroke="#f2f8fc" fill="none" stroke-linecap="round"><path d="M67 40C62 36 57 33 50 31" stroke-width="1.3"/><path d="M68 40C73 36 79 33 86 31" stroke-width="1.3"/><path d="M67 33C63 28 59 24 54 19" stroke-width="1.1"/><path d="M68 33C72 28 76 24 82 19" stroke-width="1.1"/><path d="M50 31C44 31 38 33 32 37" stroke-width="1"/><path d="M86 31C92 31 98 33 104 37" stroke-width="1"/><path d="M67.4 25V10" stroke-width="1"/><path d="M58 38C55 42 54 46 55 51" stroke-width=".9"/><path d="M78 38C81 42 82 46 81 51" stroke-width=".9"/><path d="M60 64.8L57 66.4M73 64.8L76 66.4M66.7 64.5V67" stroke-width=".7"/></g>
<circle cx="110.8" cy="8.8" r="3.2" fill="none" stroke="#eef5fb" stroke-width="1.2"/>
<path d="M115.8 8.8L118.6 8.8M115.3 11.0L117.8 12.2M113.9 12.7L115.7 14.9M111.9 13.7L112.5 16.4M109.7 13.7L109.1 16.4M107.7 12.7L105.9 14.9M106.3 11.0L103.8 12.2M105.8 8.8L103.0 8.8M106.3 6.6L103.8 5.4M107.7 4.9L105.9 2.7M109.7 3.9L109.1 1.2M111.9 3.9L112.5 1.2M113.9 4.9L115.7 2.7M115.3 6.6L117.8 5.4" stroke="#d3e5f2" stroke-width=".5"/>
<path transform="translate(11 31.5) scale(1 1)" fill="#e8f2f9" d="M0 0L3.4-2.6 2.6.4 5.6 1.8 2 2 .6 4.6 0 2-3 1.4Z"/>
<path transform="translate(21 22) scale(0.9 0.9)" fill="#e8f2f9" d="M0 0L3.4-2.6 2.6.4 5.6 1.8 2 2 .6 4.6 0 2-3 1.4Z"/>
<path transform="translate(118.5 34.5) scale(-1 1)" fill="#e8f2f9" d="M0 0L3.4-2.6 2.6.4 5.6 1.8 2 2 .6 4.6 0 2-3 1.4Z"/>
<g opacity=".8">
<path d="M79.5 64L83.5 55 87.5 64Z" fill="none" stroke="#e6f0f8" stroke-width=".8"/>
<circle cx="90.5" cy="56.5" r="1" fill="#eef5fa"/><path d="M90.5 57.5L89.8 63M90.5 59L92.5 61" stroke="#eef5fa" stroke-width=".8"/>
<path d="M85.3 69.8L94.9 69.8 96.3 72.4 86.7 72.4Z" fill="#d9e8f4"/><path d="M90.5 72.4V78.2M88.5 78.4H92.5" stroke="#d9e8f4" stroke-width=".8"/>
<path d="M93.39999999999999 63.599999999999994L103.0 63.599999999999994 104.39999999999999 66.2 94.8 66.2Z" fill="#d9e8f4"/><path d="M98.6 66.2V72.0M96.6 72.2H100.6" stroke="#d9e8f4" stroke-width=".8"/>
<path d="M101.6 69.8L111.2 69.8 112.6 72.4 103.0 72.4Z" fill="#d9e8f4"/><path d="M106.8 72.4V78.2M104.8 78.4H108.8" stroke="#d9e8f4" stroke-width=".8"/>
<path d="M64 74.5L69.5 73 72 70.6 73.2 71.4 71.6 74.6 70.8 78 69.8 75.8 65.8 76.6 64.6 79Z" fill="#f1f7fb"/>
<path d="M38.4 84V101.5M36.1 101.5H40.699999999999996M38.4 84L40.0 76.6M38.4 84L44.0 89.1M38.4 84L31.2 86.3" stroke="#e6f0f8" stroke-width=".85" fill="none"/>
<path d="M47.8 77.5V105.5M45.5 105.5H50.099999999999994M47.8 77.5L49.4 70.1M47.8 77.5L53.4 82.6M47.8 77.5L40.6 79.8" stroke="#e6f0f8" stroke-width=".85" fill="none"/>
<path d="M59.2 84V101.5M56.900000000000006 101.5H61.5M59.2 84L60.8 76.6M59.2 84L64.8 89.1M59.2 84L52.0 86.3" stroke="#e6f0f8" stroke-width=".85" fill="none"/>
<circle cx="23" cy="73.2" r="1" fill="#eef5fa"/><path d="M21.7 75H24.3L23.9 81H22.1Z" fill="#e3eef7"/>
<circle cx="33" cy="73.2" r="1" fill="#eef5fa"/><path d="M31.7 75H34.3L33.9 81H32.1Z" fill="#e3eef7"/>
<rect x="21.2" y="76" width="3.4" height="3.6" fill="#d9e8f4" opacity=".9"/>
<path d="M82.3 97.5V88.5Q82.3 83.2 88.6 83.2 94.9 83.2 94.9 88.5V97.5H90.3V91.5H87V97.5Z" fill="#c9deef"/>
<path d="M72 86Q74.5 82.4 77 86ZM74 86H75V90H74Z" fill="#eef5fa"/>
<path d="M68 91H80M66 94H80M64 97H80M62.5 100H80.0M97 84.2H112M97.5 87.2H112.5M98 90.2H112M98.5 93.2H111.5M98.5 96H109.5" stroke="#c9deef" stroke-width="1.1" stroke-dasharray=".7 .5" opacity=".85"/>
<path d="M88.5 98C92 101 95 100 93 104 91 107 84 106 82 109" fill="none" stroke="#c9deef" stroke-width=".5"/>
<path d="M58.5 113.2L65.5 106.6 79.5 106.6 85.2 113.2Z" fill="#c9deef"/>
<path d="M60.8 113.2V125.6H83V113.2" fill="none" stroke="#e6f0f8" stroke-width=".8"/>
<rect x="74" y="114.6" width="8" height="11" fill="#b5d2e8" opacity=".8"/><rect x="76.6" y="119" width="2.8" height="6.6" fill="#1f6da3"/>
<path d="M71.5 105.5Q72.5 103 73.5 105.5M69.5 106H75.5" stroke="#eef5fa" stroke-width=".7" fill="none"/>
<circle cx="67.6" cy="117.5" r=".9" fill="#f1f7fb"/><path d="M67.6 118.4V123.4M66.2 120H69M60 126.4H84" stroke="#f1f7fb" stroke-width=".9"/>
<circle cx="62" cy="124.4" r=".9" fill="#f1f7fb"/><circle cx="85.6" cy="123" r="1" fill="#f1f7fb"/><path d="M85.6 124V127" stroke="#f1f7fb" stroke-width="1"/>
<circle cx="42.4" cy="119.4" r="2.6" fill="none" stroke="#e6f0f8" stroke-width=".8"/><path d="M40 116L45 122.6M45 116L40 122.6" stroke="#e6f0f8" stroke-width=".4"/>
<path d="M46 116.5L51 114.2 52 116 49.6 120ZM52 121L56.4 118.6 57.6 121.6 53.6 123.6ZM54 125.5L58 123.8 58.6 127.2Z" fill="#f1f7fb"/>
<path d="M92 119C94 113 99 112 102 114 100 118 96 121 92 119ZM95 122.6C98 120 102 120 103.6 117" fill="#d3e5f2" stroke="#d3e5f2" stroke-width=".6"/>
<path d="M31 116C33 111 36 109 39 108M33 113L30.5 110.5M35.4 110.6L34 107.6M33.6 112.4L36.8 113.4M101 108C103.5 104 106 103 108.4 99.6M103 105.4L100.8 103M105.6 103L107.8 104.6M104 104.4L104.4 101M22 88V95M22 90L20 88.6M22 92L24 90.4M21 83H26M21.6 85H25.6" stroke="#c9deef" stroke-width=".8" fill="none"/>
<path d="M27 96.6L30 95.4 32 97 30 99Z" fill="#eef5fa"/>
</g>
</symbol></defs></svg>
<div class="card" style="left:15px;top:14px;width:1247px;height:157px"></div>
<svg style="position:absolute;left:31px;top:24px;border-radius:5px" width="137" height="137"><use href="#treeart" width="137" height="137"/></svg>
<div class="label" style="left:183px;top:25px;width:56px;height:28.5px"></div>
<div class="t" id="f_rock" style="left:190.17px;top:29.40px;font-size:19px;line-height:21px;letter-spacing:-0.912px;color:#b0680f;font-weight:400">Rock</div>
<div class="t" id="f_title" style="left:246.11px;top:24.00px;font-size:24px;line-height:27px;letter-spacing:0.017px;color:#2577b1;font-weight:400">Global Sustainability Summit 2023</div>
<div class="t" id="f_desc" style="left:182.25px;top:56.50px;font-size:18.3px;line-height:21px;letter-spacing:0.191px;color:#141414;font-weight:400">Unleash the power of sustainability at the summit for a greener world.</div>
<div class="t" id="f_meta" style="left:182.61px;top:83.50px;font-size:16.2px;line-height:18px;letter-spacing:0.284px;color:#8c8c8c;font-weight:400">admin · Updated: Sunday at 5:28 PM</div>
<div class="t" id="viewall" style="left:1067.54px;top:176.70px;font-size:18px;line-height:20px;letter-spacing:0.182px;color:#2577b1;font-weight:400">View all featured events</div>
<div class="btn" style="left:1108px;top:229px;width:154px;height:42px"></div>
<div style="position:absolute;left:1160px;top:230px;width:1px;height:40px;background:#d9d9d9"></div>
<svg style="position:absolute;left:1124px;top:239px" width="21" height="21" viewBox="0 0 21 21">
<rect x="2" y="2" width="17" height="17" rx="2.2" fill="none" stroke="#2577b1" stroke-width="2"/>
<path d="M5.3 10.4 L9 14 L15.9 6.8" fill="none" stroke="#2577b1" stroke-width="2.2" stroke-linecap="butt" stroke-linejoin="miter"/></svg>
<div class="t" id="unwatch" style="left:1175.43px;top:240.80px;font-size:18px;line-height:20px;letter-spacing:0.259px;color:#2577b1;font-weight:400">Unwatch</div>
<div class="card" style="left:15px;top:280px;width:1247px;height:423px;overflow:hidden"><div style="position:absolute;left:0;top:0;right:0;height:46px;background:linear-gradient(#f6fafe,#e9f2fb);border-bottom:1px solid #d3d6d9"></div><div style="position:absolute;left:0;right:0;top:171px;height:1px;background:#e6e6e6"></div><div style="position:absolute;left:0;right:0;top:296px;height:1px;background:#e6e6e6"></div></div>
<div class="t" id="filters" style="left:1176.07px;top:294.80px;font-size:18px;line-height:20px;letter-spacing:-0.163px;color:#2577b1;font-weight:400">Filters</div>
<svg style="position:absolute;left:1229.6px;top:300.1px" width="13" height="9" viewBox="0 0 13 9"><path d="M1.6 1.2 L11.4 1.2 Q12.3 1.4 11.7 2.2 L7.1 7.3 Q6.5 7.8 5.9 7.3 L1.3 2.2 Q0.7 1.4 1.6 1.2 Z" fill="#2577b1"/></svg>
<svg style="position:absolute;left:28px;top:343px" width="68" height="68" viewBox="0 0 68 68">
<rect width="68" height="68" rx="5" fill="#e0e0e0"/>
<g fill="#8b8b8b">
<rect x="23.6" y="14" width="4.8" height="7" rx="0.8"/><rect x="39.5" y="14" width="4.8" height="7" rx="0.8"/>
<path fill-rule="evenodd" d="M19.6 19.2 H48.4 Q52 19.2 52 22.8 V52 Q52 55.6 48.4 55.6 H19.6 Q16 55.6 16 52 V22.8 Q16 19.2 19.6 19.2 Z M19.8 27.2 V51.8 H48.2 V27.2 Z"/>
<polygon points="34.00,31.80 36.29,37.24 42.18,37.74 37.71,41.61 39.05,47.36 34.00,44.30 28.95,47.36 30.29,41.61 25.82,37.74 31.71,37.24" stroke="#8b8b8b" stroke-width="1" stroke-linejoin="round"/>
</g></svg>
<svg style="position:absolute;left:72.1px;top:387.3px" width="31" height="31" viewBox="0 0 31 31">
<circle cx="15.5" cy="15.5" r="15.5" fill="#fefefe"/>
<circle cx="15.5" cy="15.5" r="14.3" fill="#2a84c9"/>
<path d="M8.4 10.2 L3.9 15.6 L8.4 21" fill="none" stroke="#b9dcf8" stroke-width="2.1" stroke-linejoin="miter"/>
<path d="M22.6 10.2 L27.1 15.6 L22.6 21" fill="none" stroke="#b9dcf8" stroke-width="2.1" stroke-linejoin="miter"/>
<path d="M18.9 5.6 Q20.4 5.2 20.1 6.8 L17.2 17.2 L14.5 16.4 Z" fill="#f7941d"/>
<path d="M14.2 17.5 L16.9 18.3 L16.6 19.6 C16.6 22.8 14.4 24.9 12.2 25.9 C12.9 24.6 12.2 23.6 11.7 22.6 C11.1 20.8 12.4 19.2 13.9 18.8 Z" fill="#f7941d"/>
</svg>
<div class="t" id="r1_title" style="left:118.59px;top:347.00px;font-size:24px;line-height:27px;letter-spacing:-0.141px;color:#2577b1;font-weight:400">Harmony Fest 2023: Unleashing Rhythms</div>
<div class="t" id="r1_m1" style="left:119.25px;top:380.25px;font-size:16.2px;line-height:18px;letter-spacing:0.849px;color:#8c8c8c;font-weight:400">admin</div>
<div class="t" id="r1_m2" style="left:171.87px;top:380.25px;font-size:16.2px;line-height:18px;letter-spacing:0.079px;color:#646464;font-weight:400">· Yesterday at 9:21 PM</div>
<div class="t" id="r1_desc" style="left:119.53px;top:412.90px;font-size:17.1px;line-height:19px;letter-spacing:-0.089px;color:#141414;font-weight:400">Feel the beats, live the melody. Harmony Fest 2023, a symphony of sounds!</div>
<div class="dbox" style="left:971px;top:343px"><div class="dtop"></div><div class="dbot"></div><div class="ddash"></div></div><div class="t" id="d1a" style="left:1048.00px;top:354.10px;font-size:20.4px;line-height:22px;letter-spacing:0.455px;color:#a8650a;font-weight:700">Jul 15, 2023</div><div class="t" id="d1b" style="left:1052.41px;top:394.00px;font-size:20.4px;line-height:22px;letter-spacing:-0.067px;color:#2577b1;font-weight:400">Jul 16, 2023</div>
<svg style="position:absolute;left:931px;top:348.8px" width="19" height="21" viewBox="0 0 19 21">
<path d="M9.5 1 V2.4 M9.5 2.4 C5.8 2.4 4.2 5.2 4.2 8.2 C4.2 11.6 3.4 13.4 1.5 15.4 H17.5 C15.6 13.4 14.8 11.6 14.8 8.2 C14.8 5.2 13.2 2.4 9.5 2.4 Z" fill="none" stroke="#8c8c8c" stroke-width="1.7" stroke-linejoin="round" stroke-linecap="round"/>
<path d="M7.3 18 Q9.5 20.6 11.7 18 Z" fill="#8c8c8c" stroke="#8c8c8c" stroke-width="0.6" stroke-linejoin="round"/></svg>
<svg style="position:absolute;left:930.8px;top:380.3px" width="17" height="17" viewBox="0 0 17 17">
<rect x="1.6" y="1.6" width="13.8" height="13.8" rx="1.6" fill="none" stroke="#8c8c8c" stroke-width="1.7"/></svg>
<svg style="position:absolute;left:28px;top:468px;border-radius:5px" width="68" height="68" viewBox="0 0 68 68">
<defs>
<linearGradient id="sky" x1="0" y1="0" x2="0" y2="1"><stop offset="0" stop-color="#2a3846"/><stop offset="0.55" stop-color="#344653"/><stop offset="1" stop-color="#46545c"/></linearGradient>
<linearGradient id="gnd" x1="0" y1="0" x2="1" y2="0"><stop offset="0" stop-color="#3a2f2a"/><stop offset="0.4" stop-color="#54402f"/><stop offset="0.8" stop-color="#8a5f36"/><stop offset="1" stop-color="#6a4a2e"/></linearGradient>
<filter id="b1" x="-30%" y="-30%" width="160%" height="160%"><feGaussianBlur stdDeviation="1.5"/></filter>
<filter id="b2" x="-30%" y="-30%" width="160%" height="160%"><feGaussianBlur stdDeviation="0.8"/></filter>
<filter id="b3" x="-30%" y="-30%" width="160%" height="160%"><feGaussianBlur stdDeviation="0.4"/></filter>
</defs>
<rect width="68" height="68" fill="#10141a"/>
<rect x="0" y="0" width="68" height="40" fill="url(#sky)"/>
<g filter="url(#b1)"><path d="M8 -3 L30 -3 L68 24 L68 36 L50 35 Z" fill="#6f6876" opacity=".85"/><path d="M16 0 L28 1 L60 25 L54 31 L36 24 Z" fill="#9b8d9c" opacity=".75"/></g>
<g filter="url(#b2)"><circle cx="42.9" cy="20.0" r="2.1" fill="#6e86a8" opacity="0.74"/><circle cx="34.7" cy="22.0" r="2.0" fill="#a9b8d0" opacity="0.87"/><circle cx="45.3" cy="19.3" r="1.5" fill="#b9a6b4" opacity="0.62"/><circle cx="16.5" cy="4.9" r="1.1" fill="#6e86a8" opacity="0.55"/><circle cx="29.2" cy="5.1" r="1.0" fill="#a9b8d0" opacity="0.48"/><circle cx="41.0" cy="22.0" r="1.4" fill="#b9a6b4" opacity="0.45"/><circle cx="55.9" cy="26.6" r="2.2" fill="#a9b8d0" opacity="0.52"/><circle cx="29.1" cy="8.5" r="1.1" fill="#6e86a8" opacity="0.73"/><circle cx="22.5" cy="4.6" r="2.2" fill="#8d7f92" opacity="0.58"/><circle cx="29.8" cy="12.2" r="1.0" fill="#b9a6b4" opacity="0.57"/><circle cx="29.8" cy="9.4" r="1.6" fill="#6e86a8" opacity="0.60"/><circle cx="24.9" cy="13.8" r="1.9" fill="#8d7f92" opacity="0.76"/><circle cx="19.9" cy="8.3" r="1.2" fill="#d9cfd8" opacity="0.88"/><circle cx="30.1" cy="11.4" r="1.4" fill="#c4a9a4" opacity="0.80"/><circle cx="30.1" cy="12.3" r="0.9" fill="#b9a6b4" opacity="0.73"/><circle cx="59.6" cy="29.8" r="1.0" fill="#b9a6b4" opacity="0.87"/><circle cx="58.0" cy="30.8" r="1.5" fill="#a9b8d0" opacity="0.66"/><circle cx="43.2" cy="16.5" r="1.9" fill="#e9e4ea" opacity="0.84"/><circle cx="14.7" cy="0.9" r="1.3" fill="#c4a9a4" opacity="0.61"/><circle cx="19.1" cy="5.9" r="1.2" fill="#6e86a8" opacity="0.70"/><circle cx="27.1" cy="11.1" r="0.9" fill="#b9a6b4" opacity="0.77"/><circle cx="28.7" cy="8.6" r="1.5" fill="#6e86a8" opacity="0.47"/><circle cx="59.2" cy="33.5" r="1.1" fill="#c4a9a4" opacity="0.60"/><circle cx="24.0" cy="9.1" r="1.7" fill="#b9a6b4" opacity="0.48"/><circle cx="60.3" cy="25.2" r="2.0" fill="#b9a6b4" opacity="0.89"/><circle cx="40.7" cy="17.2" r="1.0" fill="#a9b8d0" opacity="0.64"/><circle cx="19.9" cy="6.8" r="1.4" fill="#b9a6b4" opacity="0.65"/><circle cx="62.5" cy="30.3" r="2.0" fill="#c4a9a4" opacity="0.65"/><circle cx="36.1" cy="16.1" r="1.2" fill="#8d7f92" opacity="0.86"/><circle cx="15.2" cy="7.6" r="2.0" fill="#c4a9a4" opacity="0.88"/><circle cx="41.4" cy="22.4" r="0.9" fill="#e9e4ea" opacity="0.68"/><circle cx="39.4" cy="17.4" r="1.5" fill="#d9cfd8" opacity="0.80"/><circle cx="49.7" cy="25.7" r="1.9" fill="#e9e4ea" opacity="0.70"/><circle cx="42.4" cy="25.0" r="2.0" fill="#e9e4ea" opacity="0.80"/><circle cx="45.1" cy="23.6" r="1.7" fill="#c4a9a4" opacity="0.83"/><circle cx="40.7" cy="8.5" r="1.9" fill="#e9e4ea" opacity="0.75"/><circle cx="36.4" cy="13.2" r="1.9" fill="#e9e4ea" opacity="0.57"/><circle cx="26.4" cy="15.2" r="2.1" fill="#8d7f92" opacity="0.61"/><circle cx="56.4" cy="23.3" r="2.2" fill="#e9e4ea" opacity="0.68"/><circle cx="36.1" cy="20.1" r="1.0" fill="#a9b8d0" opacity="0.61"/><circle cx="54.5" cy="26.9" r="1.7" fill="#8d7f92" opacity="0.53"/><circle cx="51.9" cy="23.3" r="1.6" fill="#6e86a8" opacity="0.87"/><circle cx="23.0" cy="15.5" r="1.2" fill="#d9cfd8" opacity="0.54"/><circle cx="39.9" cy="20.5" r="1.7" fill="#b9a6b4" opacity="0.55"/><circle cx="45.9" cy="22.2" r="1.5" fill="#b9a6b4" opacity="0.52"/><circle cx="56.1" cy="28.4" r="1.0" fill="#b9a6b4" opacity="0.67"/><circle cx="37.7" cy="19.8" r="1.7" fill="#d9cfd8" opacity="0.72"/><circle cx="24.9" cy="6.8" r="2.1" fill="#d9cfd8" opacity="0.61"/><circle cx="62.3" cy="26.0" r="1.8" fill="#c4a9a4" opacity="0.62"/><circle cx="10.4" cy="6.6" r="1.7" fill="#d9cfd8" opacity="0.58"/><circle cx="39.3" cy="14.1" r="1.3" fill="#b9a6b4" opacity="0.64"/><circle cx="52.1" cy="26.1" r="1.7" fill="#e9e4ea" opacity="0.66"/><circle cx="18.0" cy="8.1" r="1.1" fill="#b9a6b4" opacity="0.72"/><circle cx="31.2" cy="9.3" r="2.1" fill="#d9cfd8" opacity="0.62"/><circle cx="30.6" cy="7.7" r="1.3" fill="#c4a9a4" opacity="0.62"/><circle cx="32.2" cy="15.7" r="1.1" fill="#e9e4ea" opacity="0.67"/><circle cx="44.3" cy="26.5" r="1.0" fill="#c4a9a4" opacity="0.57"/><circle cx="63.9" cy="26.7" r="1.5" fill="#8d7f92" opacity="0.46"/><circle cx="57.5" cy="31.7" r="1.0" fill="#d9cfd8" opacity="0.50"/><circle cx="47.7" cy="13.4" r="1.4" fill="#e9e4ea" opacity="0.47"/><circle cx="16.9" cy="7.7" r="1.6" fill="#b9a6b4" opacity="0.87"/><circle cx="52.6" cy="22.4" r="1.1" fill="#e9e4ea" opacity="0.83"/><circle cx="47.5" cy="23.4" r="2.2" fill="#c4a9a4" opacity="0.74"/><circle cx="44.6" cy="15.8" r="1.8" fill="#d9cfd8" opacity="0.46"/><circle cx="17.6" cy="5.7" r="1.7" fill="#6e86a8" opacity="0.69"/><circle cx="38.5" cy="10.5" r="1.3" fill="#6e86a8" opacity="0.82"/><circle cx="21.4" cy="1.3" r="1.8" fill="#d9cfd8" opacity="0.85"/><circle cx="39.3" cy="17.3" r="0.8" fill="#a9b8d0" opacity="0.81"/><circle cx="39.7" cy="21.5" r="1.7" fill="#a9b8d0" opacity="0.86"/><circle cx="26.3" cy="19.2" r="1.3" fill="#a9b8d0" opacity="0.77"/></g>
<g filter="url(#b3)"><circle cx="53.9" cy="28.2" r="1.2" fill="#2a2631" opacity="0.74"/><circle cx="36.2" cy="14.9" r="1.2" fill="#262c38" opacity="0.82"/><circle cx="22.7" cy="10.0" r="1.4" fill="#4d3634" opacity="0.69"/><circle cx="35.8" cy="15.0" r="1.5" fill="#2a2631" opacity="0.52"/><circle cx="28.1" cy="9.7" r="1.6" fill="#2a2631" opacity="0.62"/><circle cx="34.3" cy="17.2" r="1.0" fill="#262c38" opacity="0.75"/><circle cx="20.2" cy="5.8" r="1.6" fill="#2a2631" opacity="0.75"/><circle cx="22.9" cy="9.0" r="1.2" fill="#262c38" opacity="0.55"/><circle cx="42.9" cy="20.1" r="1.6" fill="#2a2631" opacity="0.69"/><circle cx="45.7" cy="20.3" r="1.7" fill="#4d3634" opacity="0.52"/><circle cx="41.8" cy="18.8" r="1.0" fill="#262c38" opacity="0.53"/><circle cx="44.6" cy="23.7" r="1.4" fill="#4d3634" opacity="0.83"/><circle cx="34.8" cy="12.2" r="1.1" fill="#4d3634" opacity="0.82"/><circle cx="41.5" cy="17.6" r="1.6" fill="#4d3634" opacity="0.52"/><circle cx="28.0" cy="10.2" r="2.0" fill="#3a2b30" opacity="0.80"/><circle cx="36.1" cy="16.7" r="1.3" fill="#3a2b30" opacity="0.75"/><circle cx="46.3" cy="19.0" r="1.0" fill="#2a2631" opacity="0.68"/><circle cx="37.5" cy="14.9" r="1.3" fill="#262c38" opacity="0.67"/><circle cx="31.4" cy="12.7" r="1.7" fill="#2a2631" opacity="0.80"/><circle cx="57.1" cy="27.6" r="1.4" fill="#3a2b30" opacity="0.76"/><circle cx="22.2" cy="5.9" r="1.1" fill="#262c38" opacity="0.62"/><circle cx="27.1" cy="11.4" r="1.3" fill="#4d3634" opacity="0.78"/><circle cx="33.5" cy="14.2" r="1.2" fill="#262c38" opacity="0.84"/><circle cx="32.1" cy="14.8" r="0.9" fill="#3a2b30" opacity="0.76"/><circle cx="34.5" cy="14.2" r="1.1" fill="#2a2631" opacity="0.67"/><circle cx="57.1" cy="27.0" r="1.6" fill="#4d3634" opacity="0.50"/><circle cx="38.4" cy="14.9" r="1.4" fill="#262c38" opacity="0.66"/><circle cx="25.0" cy="10.7" r="1.6" fill="#2a2631" opacity="0.63"/><circle cx="34.3" cy="13.7" r="1.2" fill="#4d3634" opacity="0.79"/><circle cx="48.8" cy="23.3" r="1.6" fill="#2a2631" opacity="0.67"/><circle cx="19.9" cy="4.9" r="1.9" fill="#2a2631" opacity="0.74"/><circle cx="37.1" cy="16.8" r="1.9" fill="#2a2631" opacity="0.77"/><circle cx="30.7" cy="13.6" r="2.0" fill="#2a2631" opacity="0.57"/><circle cx="19.1" cy="5.5" r="1.2" fill="#2a2631" opacity="0.72"/></g>
<g filter="url(#b2)"><ellipse cx="37" cy="22.5" rx="5.5" ry="2.4" transform="rotate(36 37 22.5)" fill="#f1ecf0" opacity=".9"/><ellipse cx="25" cy="10" rx="4" ry="1.6" transform="rotate(36 25 10)" fill="#d8d4e0" opacity=".7"/><ellipse cx="54" cy="31" rx="4" ry="1.6" transform="rotate(30 54 31)" fill="#cbb0c0" opacity=".7"/></g>
<circle cx="62.0" cy="26.1" r="0.33" fill="#dfe9f5" opacity="0.50"/>
<circle cx="24.6" cy="2.5" r="0.42" fill="#dfe9f5" opacity="0.66"/>
<circle cx="52.8" cy="6.5" r="0.21" fill="#dfe9f5" opacity="0.42"/>
<circle cx="41.4" cy="26.9" r="0.22" fill="#dfe9f5" opacity="0.65"/>
<circle cx="30.8" cy="25.2" r="0.20" fill="#dfe9f5" opacity="0.42"/>
<circle cx="56.8" cy="31.0" r="0.30" fill="#dfe9f5" opacity="0.92"/>
<circle cx="48.7" cy="8.8" r="0.37" fill="#dfe9f5" opacity="0.45"/>
<circle cx="32.0" cy="25.3" r="0.32" fill="#dfe9f5" opacity="0.67"/>
<circle cx="53.1" cy="1.8" r="0.38" fill="#dfe9f5" opacity="0.65"/>
<circle cx="43.6" cy="32.4" r="0.41" fill="#dfe9f5" opacity="0.51"/>
<circle cx="47.3" cy="23.7" r="0.20" fill="#dfe9f5" opacity="0.53"/>
<circle cx="63.0" cy="29.3" r="0.17" fill="#dfe9f5" opacity="0.94"/>
<circle cx="11.0" cy="2.8" r="0.35" fill="#dfe9f5" opacity="0.74"/>
<circle cx="30.0" cy="13.2" r="0.26" fill="#dfe9f5" opacity="0.82"/>
<circle cx="35.5" cy="4.9" r="0.15" fill="#dfe9f5" opacity="0.82"/>
<circle cx="46.8" cy="33.0" r="0.42" fill="#dfe9f5" opacity="0.70"/>
<circle cx="9.4" cy="17.9" r="0.36" fill="#dfe9f5" opacity="0.54"/>
<circle cx="27.4" cy="4.9" r="0.29" fill="#dfe9f5" opacity="0.66"/>
<circle cx="47.4" cy="29.6" r="0.41" fill="#dfe9f5" opacity="0.77"/>
<circle cx="18.8" cy="18.2" r="0.22" fill="#dfe9f5" opacity="0.79"/>
<circle cx="54.1" cy="32.7" r="0.39" fill="#dfe9f5" opacity="0.44"/>
<circle cx="52.3" cy="14.1" r="0.36" fill="#dfe9f5" opacity="0.40"/>
<circle cx="19.4" cy="34.8" r="0.19" fill="#dfe9f5" opacity="0.42"/>
<circle cx="9.8" cy="25.4" r="0.36" fill="#dfe9f5" opacity="0.41"/>
<circle cx="3.2" cy="15.8" r="0.18" fill="#dfe9f5" opacity="0.84"/>
<circle cx="38.2" cy="11.9" r="0.23" fill="#dfe9f5" opacity="0.48"/>
<circle cx="33.8" cy="12.0" r="0.16" fill="#dfe9f5" opacity="0.70"/>
<circle cx="50.2" cy="1.0" r="0.18" fill="#dfe9f5" opacity="0.93"/>
<circle cx="56.2" cy="16.1" r="0.22" fill="#dfe9f5" opacity="0.92"/>
<circle cx="1.1" cy="19.5" r="0.18" fill="#dfe9f5" opacity="0.51"/>
<circle cx="24.4" cy="6.0" r="0.32" fill="#dfe9f5" opacity="0.49"/>
<circle cx="66.8" cy="9.9" r="0.31" fill="#dfe9f5" opacity="0.75"/>
<circle cx="9.8" cy="28.3" r="0.27" fill="#dfe9f5" opacity="0.64"/>
<circle cx="22.7" cy="16.5" r="0.21" fill="#dfe9f5" opacity="0.73"/>
<circle cx="11.7" cy="1.8" r="0.33" fill="#dfe9f5" opacity="0.49"/>
<circle cx="32.2" cy="18.2" r="0.15" fill="#dfe9f5" opacity="0.47"/>
<circle cx="57.8" cy="25.4" r="0.21" fill="#dfe9f5" opacity="0.40"/>
<circle cx="61.8" cy="8.7" r="0.34" fill="#dfe9f5" opacity="0.59"/>
<circle cx="31.6" cy="7.4" r="0.37" fill="#dfe9f5" opacity="0.57"/>
<circle cx="35.1" cy="28.3" r="0.36" fill="#dfe9f5" opacity="0.60"/>
<circle cx="55.0" cy="30.1" r="0.33" fill="#dfe9f5" opacity="0.90"/>
<circle cx="4.2" cy="18.3" r="0.24" fill="#dfe9f5" opacity="0.48"/>
<circle cx="16.2" cy="14.1" r="0.18" fill="#dfe9f5" opacity="0.62"/>
<circle cx="51.2" cy="10.4" r="0.40" fill="#dfe9f5" opacity="0.84"/>
<circle cx="51.3" cy="17.7" r="0.28" fill="#dfe9f5" opacity="0.69"/>
<circle cx="6.2" cy="7.4" r="0.34" fill="#dfe9f5" opacity="0.46"/>
<g filter="url(#b3)" stroke-linecap="round"><path d="M61 3 L55.4 8.6" stroke="#d89858" stroke-width=".9"/><circle cx="55.2" cy="8.8" r="1" fill="#f4c48a"/><path d="M63 11.6 L59.8 13.6" stroke="#c98a58" stroke-width=".8"/><circle cx="59.6" cy="13.8" r=".9" fill="#eab080"/><circle cx="62.4" cy="15.4" r=".7" fill="#d99a6a"/><path d="M2 12 L11 22.6" stroke="#7f97ae" stroke-width=".45" opacity=".7"/><circle cx="11" cy="22.8" r=".8" fill="#e4b184"/><path d="M16 27 L28 15" stroke="#7f97ae" stroke-width=".4" opacity=".5"/><circle cx="3.8" cy="26" r=".8" fill="#d9a070"/><circle cx="10.6" cy="19.6" r=".6" fill="#e4b184"/><circle cx="32.4" cy="33.4" r="1" fill="#e8eef5"/><circle cx="13" cy="27" r=".5" fill="#cfd9e6"/><circle cx="67.4" cy="12.6" r="1.2" fill="#8fd0ff"/></g>
<g filter="url(#b3)"><path d="M0 37 L20 35.6 L40 36.8 L68 34.6 L68 39 L0 39 Z" fill="#35444c" opacity=".9"/></g>
<rect x="0" y="38.6" width="68" height="2.2" fill="#778c97" filter="url(#b3)"/>
<rect x="0" y="40.6" width="68" height="27.4" fill="url(#gnd)"/>
<g filter="url(#b1)"><path d="M0 47 L22 45.6 L40 55 L58 57 L68 60 L68 68 L0 68 Z" fill="#15151c" opacity=".95"/><ellipse cx="54" cy="45.6" rx="13" ry="3.4" fill="#c78a40" opacity=".6"/><ellipse cx="10" cy="44" rx="12" ry="2.4" fill="#6a5240" opacity=".6"/></g>
<g filter="url(#b3)"><circle cx="16.3" cy="52.8" r="2.1" fill="#2d3146" opacity=".9"/><circle cx="8.6" cy="46.3" r="1.4" fill="#4a3432" opacity=".9"/><circle cx="13.5" cy="52.0" r="2.0" fill="#4a3432" opacity=".9"/><circle cx="26.5" cy="55.0" r="2.3" fill="#1b1d2a" opacity=".9"/><circle cx="18.1" cy="51.9" r="2.1" fill="#23263a" opacity=".9"/><circle cx="25.9" cy="46.2" r="2.1" fill="#3b2c30" opacity=".9"/><circle cx="7.7" cy="46.9" r="1.1" fill="#23263a" opacity=".9"/><circle cx="16.5" cy="55.5" r="2.3" fill="#4a3432" opacity=".9"/><circle cx="8.3" cy="56.2" r="1.4" fill="#3b2c30" opacity=".9"/><circle cx="1.9" cy="54.3" r="1.9" fill="#23263a" opacity=".9"/><circle cx="24.2" cy="53.6" r="2.2" fill="#1b1d2a" opacity=".9"/><circle cx="16.5" cy="48.3" r="1.7" fill="#2d3146" opacity=".9"/><circle cx="6.5" cy="56.7" r="1.8" fill="#4a3432" opacity=".9"/><circle cx="26.2" cy="53.4" r="1.5" fill="#1b1d2a" opacity=".9"/><circle cx="24.3" cy="56.0" r="1.9" fill="#4a3432" opacity=".9"/><circle cx="8.8" cy="55.3" r="2.2" fill="#23263a" opacity=".9"/><circle cx="6.7" cy="47.1" r="1.4" fill="#23263a" opacity=".9"/><circle cx="21.5" cy="46.9" r="2.3" fill="#2d3146" opacity=".9"/><circle cx="17.1" cy="54.4" r="1.3" fill="#2d3146" opacity=".9"/><circle cx="15.4" cy="52.9" r="1.9" fill="#1b1d2a" opacity=".9"/><circle cx="19.7" cy="50.6" r="1.6" fill="#1b1d2a" opacity=".9"/><circle cx="16.1" cy="48.7" r="1.6" fill="#2d3146" opacity=".9"/><circle cx="16.3" cy="56.6" r="1.3" fill="#2d3146" opacity=".9"/><circle cx="4.0" cy="49.3" r="1.8" fill="#1b1d2a" opacity=".9"/><circle cx="5.0" cy="48.1" r="1.8" fill="#23263a" opacity=".9"/><circle cx="19.7" cy="46.7" r="1.7" fill="#1b1d2a" opacity=".9"/></g>
<g filter="url(#b3)"><path d="M8.8 35 L22.6 28.8 L23.8 31.6 L10 37.8 Z" fill="#355a8c"/><path d="M12 33 L23 28.2" stroke="#d08a46" stroke-width=".7"/><path d="M9 35.6 L12.4 34" stroke="#8fb4dc" stroke-width=".9"/><path d="M16 36 L13.6 47 M16 36 L18.8 47 M16 36 L16 45.6" stroke="#6e7884" stroke-width=".55" opacity=".8"/></g>
<g filter="url(#b3)"><path d="M33.6 37.2 C35.4 37.4 36.5 39.2 36.5 41 C39.8 43.8 41.4 49 41.8 54.8 L24.6 54.8 C26.2 49 28.6 44.4 31 42.2 C31.1 39.8 31.8 37.4 33.6 37.2 Z" fill="#552c1e"/><path d="M32.6 42 C30 46 28.4 50 27.4 54.4 L24.6 54.8 C26.2 49 28.6 44.4 31 42.2 Z" fill="#6f3d28"/><path d="M36.4 41.4 C39 44.4 40.6 49 41.2 54.6 L38.4 54.6 C38.2 49.6 37.6 45 36.4 41.4Z" fill="#3f2016"/></g>
<g filter="url(#b3)"><path d="M7 66 L14 58.2 C20 56 27 56.6 31 60 C35 56 42 54.4 47 55 L50 62 C44 62 36 64 31 67.4 C25 65 14 65 7 66 Z" fill="#4d5f72"/><path d="M14 58.4 C20 56.2 27 56.8 31 60.2 L30.6 66.6 C25 64.6 14 64.8 8 65.6 Z" fill="#8a8a80"/><path d="M17 59.8 C22 58.8 26 59.6 29 61.8 L28.6 64 C24 62.6 18 62.6 13.6 63.4 Z" fill="#4f6f92"/><path d="M33 60.4 C37 57.4 42 56.4 46 56.6 L47.6 60 C43 60.4 37 62 33.2 64.4 Z" fill="#6f95c0"/><circle cx="37.6" cy="59.6" r="1" fill="#cfe2f8"/><circle cx="43" cy="58.6" r=".7" fill="#cfe2f8"/><circle cx="22" cy="61" r=".7" fill="#b8cfe8"/><path d="M6 67.4 L31 68 L52 62.6 L52 65 L31 70 L6 69 Z" fill="#0b0c10"/></g>
<rect x=".3" y=".3" width="67.4" height="67.4" rx="5" fill="none" stroke="#0c0f14" stroke-width=".8" opacity=".85"/>
</svg>
<svg style="position:absolute;left:72px;top:512.3px" width="31" height="31" viewBox="0 0 31 31">
<defs><linearGradient id="dzg" x1="0" y1="0" x2="0" y2="1"><stop offset="0" stop-color="#1a3266"/><stop offset="0.28" stop-color="#3a667e"/><stop offset="0.5" stop-color="#74b08e"/><stop offset="0.78" stop-color="#4f8f80"/><stop offset="1" stop-color="#1d4d68"/></linearGradient>
<clipPath id="dzc"><circle cx="15.5" cy="15.5" r="14.4"/></clipPath>
<filter id="dzb" x="-20%" y="-20%" width="140%" height="140%"><feGaussianBlur stdDeviation="0.35"/></filter></defs>
<circle cx="15.5" cy="15.5" r="15.5" fill="#fefefe"/>
<g clip-path="url(#dzc)"><rect width="31" height="31" fill="url(#dzg)"/><ellipse cx="3" cy="15" rx="7" ry="9" fill="#9cc6b2" opacity=".55"/>
<g filter="url(#dzb)"><ellipse cx="15.5" cy="9.84" rx="1.35" ry="5.86" fill="#fbfcfb" transform="rotate(7.7 15.5 15.7)"/><ellipse cx="15.5" cy="10.44" rx="1.35" ry="5.26" fill="#fbfcfb" transform="rotate(20.3 15.5 15.7)"/><ellipse cx="15.5" cy="9.98" rx="1.35" ry="5.72" fill="#fbfcfb" transform="rotate(43.0 15.5 15.7)"/><ellipse cx="15.5" cy="10.28" rx="1.35" ry="5.42" fill="#fbfcfb" transform="rotate(60.0 15.5 15.7)"/><ellipse cx="15.5" cy="10.08" rx="1.35" ry="5.62" fill="#fbfcfb" transform="rotate(77.6 15.5 15.7)"/><ellipse cx="15.5" cy="10.39" rx="1.35" ry="5.31" fill="#fbfcfb" transform="rotate(95.5 15.5 15.7)"/><ellipse cx="15.5" cy="10.22" rx="1.35" ry="5.48" fill="#fbfcfb" transform="rotate(112.6 15.5 15.7)"/><ellipse cx="15.5" cy="9.80" rx="1.35" ry="5.90" fill="#fbfcfb" transform="rotate(132.3 15.5 15.7)"/><ellipse cx="15.5" cy="10.12" rx="1.35" ry="5.58" fill="#fbfcfb" transform="rotate(151.7 15.5 15.7)"/><ellipse cx="15.5" cy="10.31" rx="1.35" ry="5.39" fill="#fbfcfb" transform="rotate(166.7 15.5 15.7)"/><ellipse cx="15.5" cy="10.48" rx="1.35" ry="5.22" fill="#fbfcfb" transform="rotate(182.2 15.5 15.7)"/><ellipse cx="15.5" cy="10.28" rx="1.35" ry="5.42" fill="#fbfcfb" transform="rotate(202.8 15.5 15.7)"/><ellipse cx="15.5" cy="9.88" rx="1.35" ry="5.82" fill="#fbfcfb" transform="rotate(220.3 15.5 15.7)"/><ellipse cx="15.5" cy="10.11" rx="1.35" ry="5.59" fill="#fbfcfb" transform="rotate(239.2 15.5 15.7)"/><ellipse cx="15.5" cy="10.48" rx="1.35" ry="5.22" fill="#fbfcfb" transform="rotate(255.4 15.5 15.7)"/><ellipse cx="15.5" cy="10.40" rx="1.35" ry="5.30" fill="#fbfcfb" transform="rotate(274.0 15.5 15.7)"/><ellipse cx="15.5" cy="9.80" rx="1.35" ry="5.90" fill="#fbfcfb" transform="rotate(293.1 15.5 15.7)"/><ellipse cx="15.5" cy="10.37" rx="1.35" ry="5.33" fill="#fbfcfb" transform="rotate(312.0 15.5 15.7)"/><ellipse cx="15.5" cy="9.94" rx="1.35" ry="5.76" fill="#fbfcfb" transform="rotate(331.4 15.5 15.7)"/><ellipse cx="15.5" cy="9.87" rx="1.35" ry="5.83" fill="#fbfcfb" transform="rotate(348.4 15.5 15.7)"/><circle cx="15.5" cy="15.7" r="6" fill="#eef1ee" opacity=".8"/><circle cx="15.4" cy="15.5" r="2.5" fill="#dcb228"/><circle cx="15.4" cy="15.5" r="1.2" fill="#c9981c"/></g></g>
</svg>
<div class="t" id="r2_title" style="left:118.59px;top:472.00px;font-size:24px;line-height:27px;letter-spacing:0.057px;color:#2577b1;font-weight:400">Discover the Universe - Stargazing Night</div>
<div class="t" id="r2_m1" style="left:119.46px;top:505.25px;font-size:16.2px;line-height:18px;letter-spacing:-0.246px;color:#8c8c8c;font-weight:400">Daisy</div>
<div class="t" id="r2_m2" style="left:164.51px;top:505.25px;font-size:16.2px;line-height:18px;letter-spacing:0.119px;color:#646464;font-weight:400">· Friday at 5:55 PM</div>
<div class="t" id="r2_desc" style="left:119.87px;top:537.90px;font-size:17.1px;line-height:19px;letter-spacing:-0.002px;color:#141414;font-weight:400">Join us for a mesmerizing night under the stars!</div>
<div class="dbox" style="left:971px;top:468px"><div class="dtop"></div><div class="dbot"></div><div class="ddash"></div></div><div class="t" id="d2a" style="left:1043.38px;top:479.10px;font-size:20.4px;line-height:22px;letter-spacing:0.583px;color:#a8650a;font-weight:700">Dec 17, 2023</div><div class="t" id="d2b" style="left:1046.83px;top:519.00px;font-size:20.4px;line-height:22px;letter-spacing:0.021px;color:#2577b1;font-weight:400">Dec 19, 2023</div>
<svg style="position:absolute;left:928.8px;top:473.6px" width="21" height="21" viewBox="0 0 21 21">
<circle cx="10.5" cy="10.5" r="8.6" fill="none" stroke="#8c8c8c" stroke-width="1.8"/>
<path d="M6 10.8 L9.1 13.8 L15 7.5" fill="none" stroke="#8c8c8c" stroke-width="2"/></svg>
<svg style="position:absolute;left:900px;top:473.8px" width="19" height="21" viewBox="0 0 19 21">
<path d="M9.5 1 V2.4 M9.5 2.4 C5.8 2.4 4.2 5.2 4.2 8.2 C4.2 11.6 3.4 13.4 1.5 15.4 H17.5 C15.6 13.4 14.8 11.6 14.8 8.2 C14.8 5.2 13.2 2.4 9.5 2.4 Z" fill="none" stroke="#8c8c8c" stroke-width="1.7" stroke-linejoin="round" stroke-linecap="round"/>
<path d="M7.3 18 Q9.5 20.6 11.7 18 Z" fill="#8c8c8c" stroke="#8c8c8c" stroke-width="0.6" stroke-linejoin="round"/></svg>
<svg style="position:absolute;left:930.8px;top:505.3px" width="17" height="17" viewBox="0 0 17 17">
<rect x="1.6" y="1.6" width="13.8" height="13.8" rx="1.6" fill="none" stroke="#8c8c8c" stroke-width="1.7"/></svg>
<svg style="position:absolute;left:28px;top:593px;border-radius:4.5px" width="68" height="68"><use href="#treeart" width="68" height="68"/></svg>
<svg style="position:absolute;left:72.1px;top:637.3px" width="31" height="31" viewBox="0 0 31 31">
<circle cx="15.5" cy="15.5" r="15.5" fill="#fefefe"/>
<circle cx="15.5" cy="15.5" r="14.3" fill="#2a84c9"/>
<path d="M8.4 10.2 L3.9 15.6 L8.4 21" fill="none" stroke="#b9dcf8" stroke-width="2.1" stroke-linejoin="miter"/>
<path d="M22.6 10.2 L27.1 15.6 L22.6 21" fill="none" stroke="#b9dcf8" stroke-width="2.1" stroke-linejoin="miter"/>
<path d="M18.9 5.6 Q20.4 5.2 20.1 6.8 L17.2 17.2 L14.5 16.4 Z" fill="#f7941d"/>
<path d="M14.2 17.5 L16.9 18.3 L16.6 19.6 C16.6 22.8 14.4 24.9 12.2 25.9 C12.9 24.6 12.2 23.6 11.7 22.6 C11.1 20.8 12.4 19.2 13.9 18.8 Z" fill="#f7941d"/>
</svg>
<div class="label" style="left:119.5px;top:597px;width:56.5px;height:28.5px"></div>
<div class="t" id="r3_rock" style="left:127.08px;top:602.40px;font-size:19px;line-height:21px;letter-spacing:-0.926px;color:#b0680f;font-weight:400">Rock</div>
<div class="t" id="r3_title" style="left:183.00px;top:597.00px;font-size:24px;line-height:27px;letter-spacing:0.031px;color:#2577b1;font-weight:400">Global Sustainability Summit 2023</div>
<div class="t" id="r3_m1" style="left:119.25px;top:630.25px;font-size:16.2px;line-height:18px;letter-spacing:0.849px;color:#8c8c8c;font-weight:400">admin</div>
<div class="t" id="r3_m2" style="left:171.87px;top:630.25px;font-size:16.2px;line-height:18px;letter-spacing:0.085px;color:#646464;font-weight:400">· Friday at 5:56 PM</div>
<div class="t" id="r3_desc" style="left:119.34px;top:662.90px;font-size:17.1px;line-height:19px;letter-spacing:0.092px;color:#141414;font-weight:400">Unleash the power of sustainability at the summit for a greener world.</div>
<div class="dbox" style="left:971px;top:593px"><div class="dtop"></div><div class="dbot"></div><div class="ddash"></div></div><div class="t" id="d3a" style="left:1051.11px;top:604.10px;font-size:20.4px;line-height:22px;letter-spacing:0.434px;color:#a8650a;font-weight:700">Jan 3, 2024</div><div class="t" id="d3b" style="left:1054.82px;top:644.00px;font-size:20.4px;line-height:22px;letter-spacing:-0.108px;color:#2577b1;font-weight:400">Jan 5, 2024</div>
<svg style="position:absolute;left:928.8px;top:598.6px" width="21" height="21" viewBox="0 0 21 21">
<circle cx="10.5" cy="10.5" r="8.6" fill="none" stroke="#8c8c8c" stroke-width="1.8"/>
<path d="M6 10.8 L9.1 13.8 L15 7.5" fill="none" stroke="#8c8c8c" stroke-width="2"/></svg>
<svg style="position:absolute;left:900px;top:598.8px" width="19" height="21" viewBox="0 0 19 21">
<path d="M9.5 1 V2.4 M9.5 2.4 C5.8 2.4 4.2 5.2 4.2 8.2 C4.2 11.6 3.4 13.4 1.5 15.4 H17.5 C15.6 13.4 14.8 11.6 14.8 8.2 C14.8 5.2 13.2 2.4 9.5 2.4 Z" fill="none" stroke="#8c8c8c" stroke-width="1.7" stroke-linejoin="round" stroke-linecap="round"/>
<path d="M7.3 18 Q9.5 20.6 11.7 18 Z" fill="#8c8c8c" stroke="#8c8c8c" stroke-width="0.6" stroke-linejoin="round"/></svg>
<svg style="position:absolute;left:866.5px;top:598.5px" width="24" height="21" viewBox="0 0 24 21">
<path d="M2.5 6.3 H10 C14.2 6.3 17.6 4.4 20.2 1.5 V17.6 C17.6 14.7 14.2 12.8 10 12.8 H2.5 Q1.2 12.8 1.2 11.5 V7.6 Q1.2 6.3 2.5 6.3 Z" fill="none" stroke="#f2930d" stroke-width="1.9" stroke-linejoin="round"/>
<path d="M10.6 6.3 V12.8" stroke="#f2930d" stroke-width="1.7"/>
<path d="M4.3 12.9 V18 Q4.3 19.3 5.6 19.3 H8.5 Q9.8 19.3 9.2 18 Q8.1 15.6 8.3 13" fill="none" stroke="#f2930d" stroke-width="1.9" stroke-linejoin="round"/>
<path d="M21.4 8.7 Q22.4 9.55 21.4 10.4" fill="none" stroke="#f2930d" stroke-width="1.7" stroke-linecap="round"/></svg>
<svg style="position:absolute;left:930.8px;top:630.3px" width="17" height="17" viewBox="0 0 17 17">
<rect x="1.6" y="1.6" width="13.8" height="13.8" rx="1.6" fill="none" stroke="#8c8c8c" stroke-width="1.7"/></svg>
<div class="frame"></div>
</body></html>
